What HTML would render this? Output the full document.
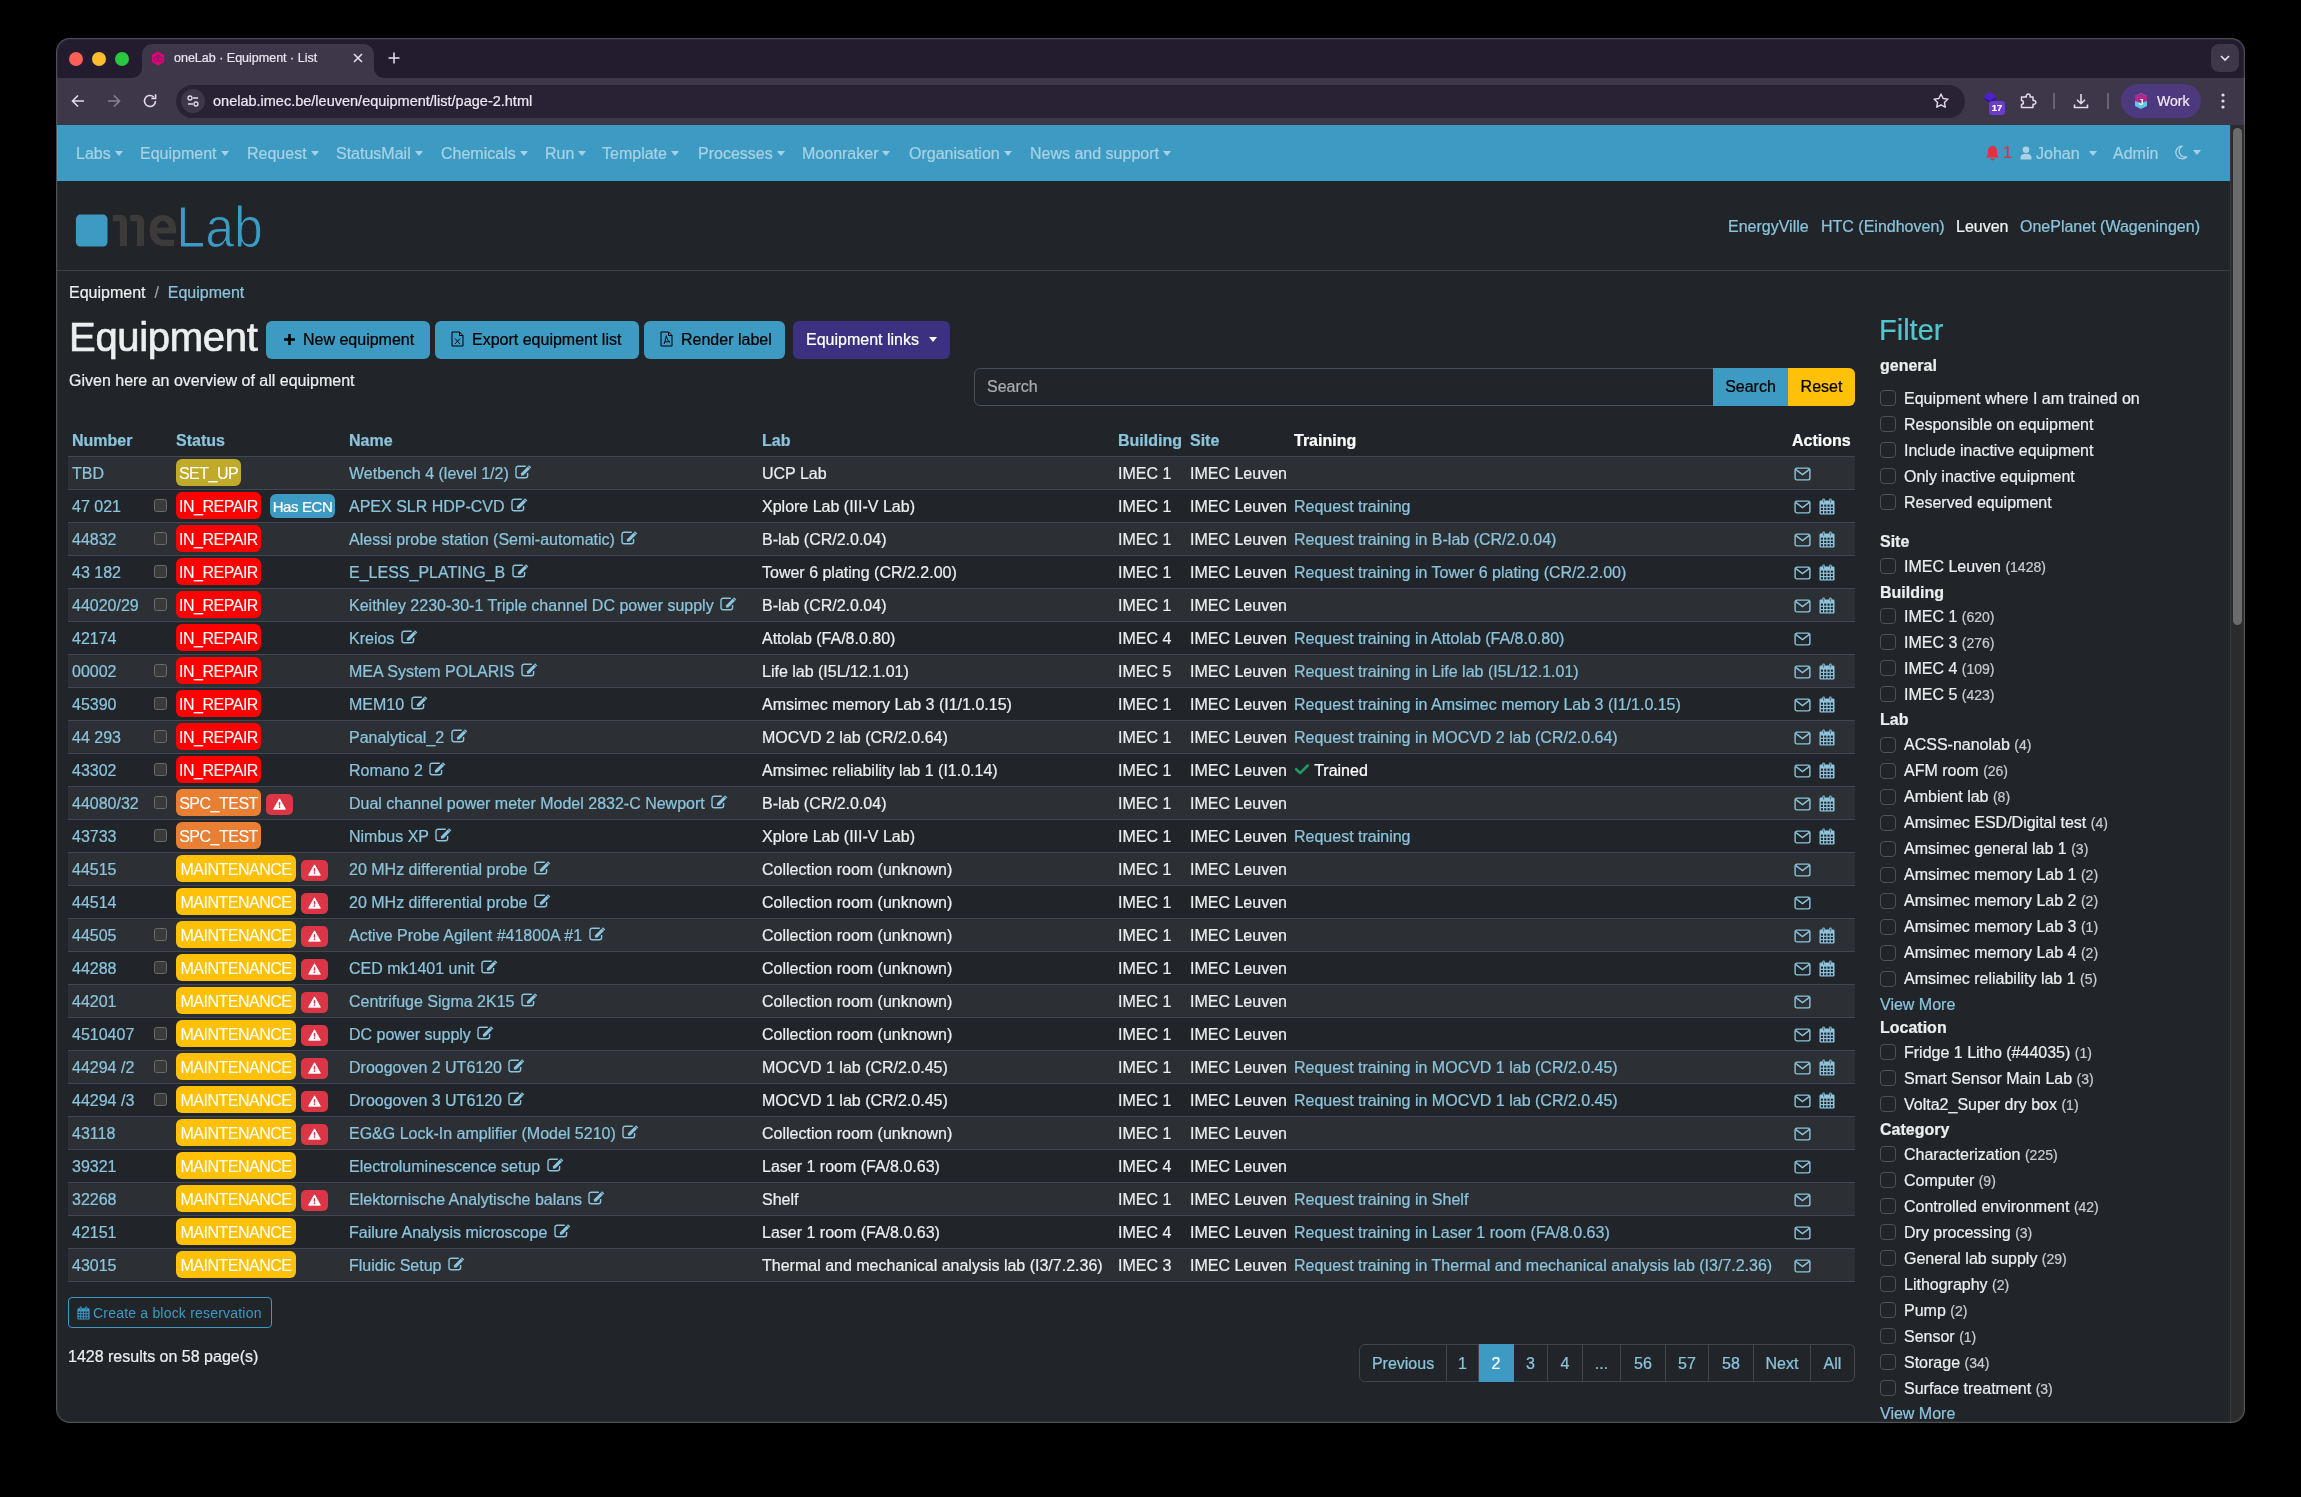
<!DOCTYPE html>
<html><head><meta charset="utf-8"><title>oneLab · Equipment · List</title>
<style>
*{box-sizing:border-box;margin:0;padding:0}
html,body{width:2301px;height:1497px;background:#000;overflow:hidden;font-family:"Liberation Sans",sans-serif;}
#win{position:absolute;left:56px;top:38px;width:2189px;height:1385px;border-radius:14px;overflow:hidden;background:#212529;}
#winb{position:absolute;left:56px;top:38px;width:2189px;height:1385px;border-radius:14px;box-shadow:inset 0 0 0 1px rgba(255,255,255,0.16),inset 0 0 0 2px rgba(255,255,255,0.05);pointer-events:none;z-index:50}
.abs{position:absolute}
#tabstrip{position:absolute;left:0;top:0;width:100%;height:40px;background:#231c2e}
#toolbar{position:absolute;left:0;top:40px;width:100%;height:47px;background:#3e3649}
#page{position:absolute;left:-56px;top:-38px;width:2301px;height:1497px;will-change:transform;-webkit-text-stroke-width:0.22px}
.nav{position:absolute;left:57px;top:125px;width:2173px;height:56px;background:#3d9ac2}
.nl{position:absolute;top:142px;font-size:16px;line-height:24px;color:#a8d2e4;white-space:nowrap}
.caret{display:inline-block;width:0;height:0;border-top:5px solid #a8d2e4;border-left:4.8px solid transparent;border-right:4.8px solid transparent;margin-left:4px;vertical-align:3.5px}
.hdr-line{position:absolute;left:57px;top:270px;width:2173px;height:1px;background:#3a3f44}
.t16{position:absolute;font-size:16px;line-height:24px;white-space:nowrap;color:#eceef0}
.th{position:absolute;font-size:16px;line-height:24px;font-weight:bold;white-space:nowrap}
.hline{position:absolute;left:68px;width:1787px;height:1px;background:#42474d}
.tr{position:absolute;left:68px;width:1787px;height:33px;border-bottom:1px solid #42474d;background:#212529}
.tr.odd{background:#2c3034}
.td{position:absolute;top:5px;font-size:16px;line-height:24px;white-space:nowrap;color:#eceef0}
.lk{color:#8bc4dc}
.ied{position:relative;top:0px;margin-left:2px}
.cb{position:absolute;top:9px;width:13px;height:13px;border-radius:2.5px;background:#3a3a3b;border:1px solid #6a6a6b}
.badge{position:absolute;-webkit-text-stroke-width:0.1px;top:2px;height:27px;border-radius:6px;color:#fff;font-size:16px;line-height:29px;text-align:center;white-space:nowrap;letter-spacing:-0.5px}
.setup{background:#bfaa2a;width:65px}
.repair{background:#ff0000;width:85px}
.spc{background:#e87f33;width:85px}
.maint{background:#ffc107;width:120px}
.ecn{position:absolute;top:4px;height:24px;width:65px;border-radius:6px;background:#3d9ac2;color:#fff;font-size:15px;line-height:25px;text-align:center;letter-spacing:-0.4px;white-space:nowrap}
.warn{position:absolute;top:7px;height:21px;width:27px;border-radius:5px;background:#dc3545;text-align:center;padding-top:4px}
.warn svg{display:block;margin:0 auto}
.mail{position:absolute;top:10px;line-height:0}
.cal{position:absolute;top:8px;line-height:0}
.chk{position:relative;top:0px}
.btn{position:absolute;top:321px;height:38px;border-radius:6px;background:#3d9ac2;color:#000;font-size:16px;line-height:38px;white-space:nowrap}
.filt-h{position:absolute;font-size:29px;line-height:34px;color:#55c5cd}
.fh{position:absolute;font-size:16px;line-height:24px;font-weight:bold;color:#eceef0;white-space:nowrap}
.fi{position:absolute;font-size:16px;line-height:24px;color:#eceef0;white-space:nowrap}
.fm{position:absolute;font-size:16px;line-height:24px;color:#8bc4dc;white-space:nowrap}
.cnt{font-size:14px;color:#c8cbcf}
.fcb{position:absolute;width:16px;height:16px;border:1px solid #4d5257;border-radius:4px;background:#212529}
.pg{position:absolute;top:1344px;height:38px;border:1px solid #41464b;border-left:none;color:#8bc4dc;font-size:16px;line-height:38px;text-align:center}
</style></head>
<body>
<div id="win"><div id="page">
<div class="abs" style="left:57px;top:38px;width:2188px;height:40px;background:#231c2e"></div>
<div class="abs" style="left:57px;top:78px;width:2188px;height:47px;background:#3e3649"></div>
<div class="abs" style="left:142px;top:44px;width:232px;height:36px;background:#3e3649;border-radius:10px 10px 0 0"></div>
<div class="abs" style="left:132px;top:68px;width:10px;height:10px;background:#3e3649"></div><div class="abs" style="left:122px;top:58px;width:20px;height:20px;background:#231c2e;border-radius:0 0 10px 0"></div>
<div class="abs" style="left:374px;top:68px;width:10px;height:10px;background:#3e3649"></div><div class="abs" style="left:374px;top:58px;width:20px;height:20px;background:#231c2e;border-radius:0 0 0 10px"></div>
<div class="abs" style="left:69px;top:52px;width:14px;height:14px;border-radius:50%;background:#fe5f57"></div>
<div class="abs" style="left:92px;top:52px;width:14px;height:14px;border-radius:50%;background:#febc2e"></div>
<div class="abs" style="left:115px;top:52px;width:14px;height:14px;border-radius:50%;background:#28c840"></div>
<svg class="abs" style="left:151px;top:51px" width="14" height="15" viewBox="0 0 14 15"><path d="M7 0.5L13 4v7L7 14.5 1 11V4z" fill="#e6007e"/><g fill="none" stroke="#8a1a5a" stroke-width="1.1"><path d="M6.3 3.6V10.3H4.6A1.7 2.1 0 0 1 4.6 6.1H6.3"/><path d="M7.7 3.6V10.3H9.4A1.7 2.1 0 0 0 9.4 6.1H7.7"/></g></svg>
<div class="abs" style="left:174px;top:50px;font-size:12.5px;line-height:16px;color:#e9e4ef;white-space:nowrap">oneLab · Equipment · List</div>
<svg class="abs" style="left:352px;top:52px" width="12" height="12" viewBox="0 0 12 12"><path d="M2 2L10 10M10 2L2 10" stroke="#e9e4ef" stroke-width="1.5"/></svg>
<svg class="abs" style="left:387px;top:51px" width="14" height="14" viewBox="0 0 14 14"><path d="M7 1.5V12.5M1.5 7H12.5" stroke="#e9e4ef" stroke-width="1.5"/></svg>
<div class="abs" style="left:2211px;top:44px;width:28px;height:28px;border-radius:8px;background:#3e3649"></div>
<svg class="abs" style="left:2218px;top:52px" width="14" height="12" viewBox="0 0 14 12"><path d="M3 4l4 4 4-4" fill="none" stroke="#e9e4ef" stroke-width="1.6"/></svg>
<svg class="abs" style="left:68px;top:91px" width="20" height="20" viewBox="0 0 20 20"><path d="M16 10H4.5M10 4.5L4.5 10 10 15.5" fill="none" stroke="#e3dbe9" stroke-width="1.6"/></svg>
<svg class="abs" style="left:104px;top:91px" width="20" height="20" viewBox="0 0 20 20"><path d="M4 10H15.5M10 4.5L15.5 10 10 15.5" fill="none" stroke="#8a8094" stroke-width="1.6"/></svg>
<svg class="abs" style="left:140px;top:91px" width="20" height="20" viewBox="0 0 20 20"><path d="M15.5 10A5.5 5.5 0 1 1 13.6 5.8" fill="none" stroke="#e3dbe9" stroke-width="1.6"/><path d="M15.6 3.2V7.4H11.4" fill="none" stroke="#e3dbe9" stroke-width="1.6"/></svg>
<div class="abs" style="left:176px;top:85px;width:1789px;height:33px;border-radius:17px;background:#292235"></div>
<div class="abs" style="left:181px;top:89px;width:24px;height:24px;border-radius:50%;background:#3e3649"></div>
<svg class="abs" style="left:185px;top:93px" width="16" height="16" viewBox="0 0 16 16"><circle cx="5" cy="5" r="2" fill="none" stroke="#e3dbe9" stroke-width="1.3"/><path d="M8 5H13M3 11H8" stroke="#e3dbe9" stroke-width="1.3"/><circle cx="11" cy="11" r="2" fill="none" stroke="#e3dbe9" stroke-width="1.3"/></svg>
<div class="abs" style="left:213px;top:92px;font-size:14.5px;line-height:18px;color:#ebe6f0;white-space:nowrap">onelab.imec.be/leuven/equipment/list/page-2.html</div>
<svg class="abs" style="left:1932px;top:92px" width="18" height="18" viewBox="0 0 18 18"><path d="M9 2l2.1 4.5 4.9.6-3.6 3.3.9 4.8L9 12.8l-4.3 2.4.9-4.8L2 7.1l4.9-.6z" fill="none" stroke="#e3dbe9" stroke-width="1.4" stroke-linejoin="round"/></svg>
<svg class="abs" style="left:1981px;top:91px" width="18" height="16" viewBox="0 0 18 16"><path d="M9 4L15 8 9 12 3 8z" fill="#2e12a0"/><path d="M9 1L16 5.5 9 10 2 5.5z" fill="#4a22c8"/></svg>
<div class="abs" style="left:1989px;top:101px;width:16px;height:14px;border-radius:3px;background:#6a3ccc;color:#fff;font-size:9.5px;line-height:14px;font-weight:bold;text-align:center">17</div>
<svg class="abs" style="left:2018px;top:92px" width="20" height="18" viewBox="0 0 20 18"><path d="M3.5 5H8.3V4A1.9 1.9 0 0 1 12.1 4V5H15V8.6H16A1.8 1.8 0 0 1 16 12.2H15V15.5H3.5V12.4A1.9 1.9 0 0 0 3.5 8.6Z" fill="none" stroke="#e3dbe9" stroke-width="1.5" stroke-linejoin="round"/></svg>
<div class="abs" style="left:2053px;top:93px;width:1.5px;height:16px;background:#6b6176"></div>
<svg class="abs" style="left:2072px;top:92px" width="18" height="18" viewBox="0 0 18 18"><path d="M9 2V11.5M5 7.8L9 11.7 13 7.8M2.5 12.5V15.5H15.5V12.5" fill="none" stroke="#e3dbe9" stroke-width="1.6"/></svg>
<div class="abs" style="left:2107px;top:93px;width:1.5px;height:16px;background:#6b6176"></div>
<div class="abs" style="left:2121px;top:84px;width:80px;height:34px;border-radius:17px;background:#4d3a7e"></div>
<svg class="abs" style="left:2134px;top:92px" width="14" height="18" viewBox="0 0 14 18"><path d="M7 1L13 4V14L7 17 1 14V4z" fill="#5bc8e8"/><path d="M7 1L13 4V9L7 11 1 9V4z" fill="#b0288c"/><text x="7" y="13" font-size="9" font-family="Liberation Sans" font-weight="bold" fill="#fff" text-anchor="middle">J</text></svg>
<div class="abs" style="left:2157px;top:92px;font-size:14px;line-height:18px;color:#efe9f5;white-space:nowrap">Work</div>
<svg class="abs" style="left:2219px;top:92px" width="8" height="18" viewBox="0 0 8 18"><circle cx="4" cy="3" r="1.6" fill="#e3dbe9"/><circle cx="4" cy="9" r="1.6" fill="#e3dbe9"/><circle cx="4" cy="15" r="1.6" fill="#e3dbe9"/></svg>
<div class="nav"></div>
<div class="nl" style="left:76px">Labs<span class="caret"></span></div>
<div class="nl" style="left:140px">Equipment<span class="caret"></span></div>
<div class="nl" style="left:247px">Request<span class="caret"></span></div>
<div class="nl" style="left:336px">StatusMail<span class="caret"></span></div>
<div class="nl" style="left:441px">Chemicals<span class="caret"></span></div>
<div class="nl" style="left:545px">Run<span class="caret"></span></div>
<div class="nl" style="left:602px">Template<span class="caret"></span></div>
<div class="nl" style="left:698px">Processes<span class="caret"></span></div>
<div class="nl" style="left:802px">Moonraker<span class="caret"></span></div>
<div class="nl" style="left:909px">Organisation<span class="caret"></span></div>
<div class="nl" style="left:1030px">News and support<span class="caret"></span></div>
<svg class="abs" style="left:1985px;top:145px" width="15" height="16" viewBox="0 0 15 16"><path d="M7.5 1C4.5 1 3 3.5 3 6.2V9.5L1 12.5H14L12 9.5V6.2C12 3.5 10.5 1 7.5 1z" fill="#e4303f"/><path d="M5.5 13.5A2 2 0 0 0 9.5 13.5z" fill="#e4303f"/></svg>
<div class="t16" style="left:2003px;top:141px;color:#e4303f">1</div>
<svg class="abs" style="left:2020px;top:146px" width="12" height="14" viewBox="0 0 12 14"><circle cx="6" cy="3.8" r="3.3" fill="#a8d2e4"/><path d="M0.5 13.5V11.5C0.5 9 2.5 7.8 6 7.8S11.5 9 11.5 11.5V13.5z" fill="#a8d2e4"/></svg>
<div class="nl" style="left:2036px">Johan<span class="caret" style="margin-left:9px"></span></div>
<div class="nl" style="left:2113px">Admin</div>
<svg class="abs" style="left:2174px;top:145px" width="14" height="15" viewBox="0 0 14 15"><path d="M8.5 1.2A6.3 6.3 0 1 0 13 11.5 5.4 5.4 0 0 1 8.5 1.2z" fill="none" stroke="#a8d2e4" stroke-width="1.3"/></svg>
<span class="caret abs" style="left:2193px;top:150px;margin:0"></span>
<svg class="abs" style="left:75px;top:200px" width="190" height="50" viewBox="0 0 190 50">
<rect x="0.9" y="14.6" width="31.6" height="32" rx="4.5" fill="#3d9ac2"/>
<g fill="#3c3b39" transform="translate(-75 -200)">
<path d="M112.8 214.9H121A6 6 0 0 1 127 220.9V245.9H119.9V221.2H112.8Z"/>
<path d="M130.2 214.9H138A6 6 0 0 1 144 220.9V245.9H136.9V221.2H130.2Z"/>
<path fill-rule="evenodd" d="M176 233.4V229C176 220.5 170.5 214.9 162.8 214.9C154.5 214.9 149.5 221.5 149.5 230.4C149.5 239.5 155 245.9 163.5 245.9H174V239.7H164C160 239.7 157.3 237 157 233.4ZM157 227.8C157.6 223.8 159.8 221.2 163 221.2C166.2 221.2 168.5 223.8 169 227.8Z"/>
</g>
<text x="101.3" y="46.6" font-family="Liberation Sans" font-size="57" fill="#3d9ac2" stroke="#212529" stroke-width="1" textLength="86.5" lengthAdjust="spacingAndGlyphs">Lab</text>
</svg>
<div class="t16" style="left:1728px;top:215px;color:#8bc4dc">EnergyVille</div>
<div class="t16" style="left:1821px;top:215px;color:#8bc4dc">HTC (Eindhoven)</div>
<div class="t16" style="left:1956px;top:215px;color:#f0f2f4">Leuven</div>
<div class="t16" style="left:2020px;top:215px;color:#8bc4dc">OnePlanet (Wageningen)</div>
<div class="hdr-line"></div>
<div class="t16" style="left:69px;top:281px">Equipment&nbsp;&nbsp;<span style="color:#9aa0a6">/</span>&nbsp;&nbsp;<span style="color:#8bc4dc">Equipment</span></div>
<div class="abs" style="left:69px;top:313px;font-size:40px;line-height:48px;color:#eceef0;letter-spacing:-0.3px;white-space:nowrap;-webkit-text-stroke-width:0.7px">Equipment</div>
<div class="btn" style="left:266px;width:164px;padding-left:17px"><svg style="position:relative;top:1px;margin-right:7px" width="13" height="13" viewBox="0 0 13 13"><path d="M6.5 1V12M1 6.5H12" stroke="#000" stroke-width="2.6"/></svg>New equipment</div>
<div class="btn" style="left:435px;width:204px;padding-left:16px"><svg style="position:relative;top:2px;margin-right:8px" width="13" height="16" viewBox="0 0 13 16"><path d="M1 1H8.5L12 4.5V15H1z M8.5 1V4.5H12" fill="none" stroke="#000" stroke-width="1"/><path d="M4 7.5L9 13M9 7.5L4 13" stroke="#000" stroke-width="1"/></svg>Export equipment list</div>
<div class="btn" style="left:644px;width:141px;padding-left:16px"><svg style="position:relative;top:2px;margin-right:8px" width="13" height="16" viewBox="0 0 13 16"><path d="M1 1H8.5L12 4.5V15H1z M8.5 1V4.5H12" fill="none" stroke="#000" stroke-width="1"/><path d="M6.5 4.5C5.5 6 6 9 4 13M6.5 5.5C7 8 8 10 10 11M4 11.5C6 10.5 8 10.5 10 11" fill="none" stroke="#000" stroke-width=".9"/></svg>Render label</div>
<div class="btn" style="left:793px;width:157px;padding-left:13px;background:#3b3180;color:#fff">Equipment links<span class="caret" style="border-top-color:#fff;margin-left:10px"></span></div>
<div class="t16" style="left:69px;top:369px">Given here an overview of all equipment</div>
<div class="abs" style="left:974px;top:368px;width:740px;height:38px;border:1px solid #495057;border-radius:6px 0 0 6px;background:#212529"></div>
<div class="t16" style="left:987px;top:375px;color:#a9adb1">Search</div>
<div class="abs" style="left:1713px;top:368px;width:75px;height:38px;background:#3d9ac2;color:#000;font-size:16px;line-height:38px;text-align:center">Search</div>
<div class="abs" style="left:1788px;top:368px;width:67px;height:38px;background:#ffc107;color:#000;font-size:16px;line-height:38px;text-align:center;border-radius:0 6px 6px 0">Reset</div>
<div class="th" style="left:72px;top:429px;color:#8bc4dc">Number</div>
<div class="th" style="left:176px;top:429px;color:#8bc4dc">Status</div>
<div class="th" style="left:349px;top:429px;color:#8bc4dc">Name</div>
<div class="th" style="left:762px;top:429px;color:#8bc4dc">Lab</div>
<div class="th" style="left:1118px;top:429px;color:#8bc4dc">Building</div>
<div class="th" style="left:1190px;top:429px;color:#8bc4dc">Site</div>
<div class="th" style="left:1294px;top:429px;color:#fff">Training</div>
<div class="th" style="left:1792px;top:429px;color:#fff">Actions</div>
<div class="hline" style="top:456px"></div>
<div class="tr odd" style="top:457px">
<div class="td lk" style="left:4px">TBD</div>
<div class="badge setup" style="left:108px">SET_UP</div>
<div class="td lk" style="left:281px">Wetbench 4 (level 1/2)&nbsp;<svg class="ied" width="17" height="14" viewBox="0 0 17 14"><path d="M10.8 1.2H3.2A2.2 2.2 0 0 0 1 3.4V10.6A2.2 2.2 0 0 0 3.2 12.8H10.4A2.2 2.2 0 0 0 12.6 10.6V8.0" fill="none" stroke="#8bc4dc" stroke-width="1.4"/><path d="M14 0.3L16.3 2.6 8.4 10.5 5.9 10.8 6.1 8.2Z" fill="#8bc4dc" stroke="#212529" stroke-width="1" paint-order="stroke"/><path d="M12.9 1.4L15.2 3.7" stroke="#212529" stroke-width="0.7"/></svg></div>
<div class="td" style="left:694px">UCP Lab</div>
<div class="td" style="left:1050px">IMEC 1</div>
<div class="td" style="left:1122px">IMEC Leuven</div>
<div class="mail" style="left:1726px"><svg class="imail" width="17" height="14" viewBox="0 0 17 14"><rect x="1.1" y="1.1" width="14.8" height="11.8" rx="1.8" fill="none" stroke="#8bc4dc" stroke-width="1.4"/><path d="M1.6 2.4l6.9 5.2 6.9-5.2" fill="none" stroke="#8bc4dc" stroke-width="1.4"/></svg></div>
</div>
<div class="tr" style="top:490px">
<div class="td lk" style="left:4px">47 021</div>
<div class="cb" style="left:86px"></div>
<div class="badge repair" style="left:108px">IN_REPAIR</div>
<div class="ecn" style="left:202px">Has ECN</div>
<div class="td lk" style="left:281px">APEX SLR HDP-CVD&nbsp;<svg class="ied" width="17" height="14" viewBox="0 0 17 14"><path d="M10.8 1.2H3.2A2.2 2.2 0 0 0 1 3.4V10.6A2.2 2.2 0 0 0 3.2 12.8H10.4A2.2 2.2 0 0 0 12.6 10.6V8.0" fill="none" stroke="#8bc4dc" stroke-width="1.4"/><path d="M14 0.3L16.3 2.6 8.4 10.5 5.9 10.8 6.1 8.2Z" fill="#8bc4dc" stroke="#212529" stroke-width="1" paint-order="stroke"/><path d="M12.9 1.4L15.2 3.7" stroke="#212529" stroke-width="0.7"/></svg></div>
<div class="td" style="left:694px">Xplore Lab (III-V Lab)</div>
<div class="td" style="left:1050px">IMEC 1</div>
<div class="td" style="left:1122px">IMEC Leuven</div>
<div class="td lk" style="left:1226px">Request training</div>
<div class="mail" style="left:1726px"><svg class="imail" width="17" height="14" viewBox="0 0 17 14"><rect x="1.1" y="1.1" width="14.8" height="11.8" rx="1.8" fill="none" stroke="#8bc4dc" stroke-width="1.4"/><path d="M1.6 2.4l6.9 5.2 6.9-5.2" fill="none" stroke="#8bc4dc" stroke-width="1.4"/></svg></div>
<div class="cal" style="left:1751px"><svg class="ical" width="16" height="17" viewBox="0 0 16 17"><rect x="0.5" y="2.5" width="15" height="14" rx="1.2" fill="#8bc4dc"/><rect x="3.3" y="0.6" width="2.6" height="4.6" rx="1.3" fill="#8bc4dc"/><rect x="10.1" y="0.6" width="2.6" height="4.6" rx="1.3" fill="#8bc4dc"/><rect x="4.1" y="1.6" width="1" height="3" fill="#212529" opacity=".6"/><rect x="10.9" y="1.6" width="1" height="3" fill="#212529" opacity=".6"/><rect x="1.90" y="6.60" width="2.1" height="2.1" fill="#212529"/><rect x="5.20" y="6.60" width="2.1" height="2.1" fill="#212529"/><rect x="8.50" y="6.60" width="2.1" height="2.1" fill="#212529"/><rect x="11.80" y="6.60" width="2.1" height="2.1" fill="#212529"/><rect x="1.90" y="9.90" width="2.1" height="2.1" fill="#212529"/><rect x="5.20" y="9.90" width="2.1" height="2.1" fill="#212529"/><rect x="8.50" y="9.90" width="2.1" height="2.1" fill="#212529"/><rect x="11.80" y="9.90" width="2.1" height="2.1" fill="#212529"/><rect x="1.90" y="13.20" width="2.1" height="2.1" fill="#212529"/><rect x="5.20" y="13.20" width="2.1" height="2.1" fill="#212529"/><rect x="8.50" y="13.20" width="2.1" height="2.1" fill="#212529"/><rect x="11.80" y="13.20" width="2.1" height="2.1" fill="#212529"/></svg></div>
</div>
<div class="tr odd" style="top:523px">
<div class="td lk" style="left:4px">44832</div>
<div class="cb" style="left:86px"></div>
<div class="badge repair" style="left:108px">IN_REPAIR</div>
<div class="td lk" style="left:281px">Alessi probe station (Semi-automatic)&nbsp;<svg class="ied" width="17" height="14" viewBox="0 0 17 14"><path d="M10.8 1.2H3.2A2.2 2.2 0 0 0 1 3.4V10.6A2.2 2.2 0 0 0 3.2 12.8H10.4A2.2 2.2 0 0 0 12.6 10.6V8.0" fill="none" stroke="#8bc4dc" stroke-width="1.4"/><path d="M14 0.3L16.3 2.6 8.4 10.5 5.9 10.8 6.1 8.2Z" fill="#8bc4dc" stroke="#212529" stroke-width="1" paint-order="stroke"/><path d="M12.9 1.4L15.2 3.7" stroke="#212529" stroke-width="0.7"/></svg></div>
<div class="td" style="left:694px">B-lab (CR/2.0.04)</div>
<div class="td" style="left:1050px">IMEC 1</div>
<div class="td" style="left:1122px">IMEC Leuven</div>
<div class="td lk" style="left:1226px">Request training in B-lab (CR/2.0.04)</div>
<div class="mail" style="left:1726px"><svg class="imail" width="17" height="14" viewBox="0 0 17 14"><rect x="1.1" y="1.1" width="14.8" height="11.8" rx="1.8" fill="none" stroke="#8bc4dc" stroke-width="1.4"/><path d="M1.6 2.4l6.9 5.2 6.9-5.2" fill="none" stroke="#8bc4dc" stroke-width="1.4"/></svg></div>
<div class="cal" style="left:1751px"><svg class="ical" width="16" height="17" viewBox="0 0 16 17"><rect x="0.5" y="2.5" width="15" height="14" rx="1.2" fill="#8bc4dc"/><rect x="3.3" y="0.6" width="2.6" height="4.6" rx="1.3" fill="#8bc4dc"/><rect x="10.1" y="0.6" width="2.6" height="4.6" rx="1.3" fill="#8bc4dc"/><rect x="4.1" y="1.6" width="1" height="3" fill="#212529" opacity=".6"/><rect x="10.9" y="1.6" width="1" height="3" fill="#212529" opacity=".6"/><rect x="1.90" y="6.60" width="2.1" height="2.1" fill="#212529"/><rect x="5.20" y="6.60" width="2.1" height="2.1" fill="#212529"/><rect x="8.50" y="6.60" width="2.1" height="2.1" fill="#212529"/><rect x="11.80" y="6.60" width="2.1" height="2.1" fill="#212529"/><rect x="1.90" y="9.90" width="2.1" height="2.1" fill="#212529"/><rect x="5.20" y="9.90" width="2.1" height="2.1" fill="#212529"/><rect x="8.50" y="9.90" width="2.1" height="2.1" fill="#212529"/><rect x="11.80" y="9.90" width="2.1" height="2.1" fill="#212529"/><rect x="1.90" y="13.20" width="2.1" height="2.1" fill="#212529"/><rect x="5.20" y="13.20" width="2.1" height="2.1" fill="#212529"/><rect x="8.50" y="13.20" width="2.1" height="2.1" fill="#212529"/><rect x="11.80" y="13.20" width="2.1" height="2.1" fill="#212529"/></svg></div>
</div>
<div class="tr" style="top:556px">
<div class="td lk" style="left:4px">43 182</div>
<div class="cb" style="left:86px"></div>
<div class="badge repair" style="left:108px">IN_REPAIR</div>
<div class="td lk" style="left:281px">E_LESS_PLATING_B&nbsp;<svg class="ied" width="17" height="14" viewBox="0 0 17 14"><path d="M10.8 1.2H3.2A2.2 2.2 0 0 0 1 3.4V10.6A2.2 2.2 0 0 0 3.2 12.8H10.4A2.2 2.2 0 0 0 12.6 10.6V8.0" fill="none" stroke="#8bc4dc" stroke-width="1.4"/><path d="M14 0.3L16.3 2.6 8.4 10.5 5.9 10.8 6.1 8.2Z" fill="#8bc4dc" stroke="#212529" stroke-width="1" paint-order="stroke"/><path d="M12.9 1.4L15.2 3.7" stroke="#212529" stroke-width="0.7"/></svg></div>
<div class="td" style="left:694px">Tower 6 plating (CR/2.2.00)</div>
<div class="td" style="left:1050px">IMEC 1</div>
<div class="td" style="left:1122px">IMEC Leuven</div>
<div class="td lk" style="left:1226px">Request training in Tower 6 plating (CR/2.2.00)</div>
<div class="mail" style="left:1726px"><svg class="imail" width="17" height="14" viewBox="0 0 17 14"><rect x="1.1" y="1.1" width="14.8" height="11.8" rx="1.8" fill="none" stroke="#8bc4dc" stroke-width="1.4"/><path d="M1.6 2.4l6.9 5.2 6.9-5.2" fill="none" stroke="#8bc4dc" stroke-width="1.4"/></svg></div>
<div class="cal" style="left:1751px"><svg class="ical" width="16" height="17" viewBox="0 0 16 17"><rect x="0.5" y="2.5" width="15" height="14" rx="1.2" fill="#8bc4dc"/><rect x="3.3" y="0.6" width="2.6" height="4.6" rx="1.3" fill="#8bc4dc"/><rect x="10.1" y="0.6" width="2.6" height="4.6" rx="1.3" fill="#8bc4dc"/><rect x="4.1" y="1.6" width="1" height="3" fill="#212529" opacity=".6"/><rect x="10.9" y="1.6" width="1" height="3" fill="#212529" opacity=".6"/><rect x="1.90" y="6.60" width="2.1" height="2.1" fill="#212529"/><rect x="5.20" y="6.60" width="2.1" height="2.1" fill="#212529"/><rect x="8.50" y="6.60" width="2.1" height="2.1" fill="#212529"/><rect x="11.80" y="6.60" width="2.1" height="2.1" fill="#212529"/><rect x="1.90" y="9.90" width="2.1" height="2.1" fill="#212529"/><rect x="5.20" y="9.90" width="2.1" height="2.1" fill="#212529"/><rect x="8.50" y="9.90" width="2.1" height="2.1" fill="#212529"/><rect x="11.80" y="9.90" width="2.1" height="2.1" fill="#212529"/><rect x="1.90" y="13.20" width="2.1" height="2.1" fill="#212529"/><rect x="5.20" y="13.20" width="2.1" height="2.1" fill="#212529"/><rect x="8.50" y="13.20" width="2.1" height="2.1" fill="#212529"/><rect x="11.80" y="13.20" width="2.1" height="2.1" fill="#212529"/></svg></div>
</div>
<div class="tr odd" style="top:589px">
<div class="td lk" style="left:4px">44020/29</div>
<div class="cb" style="left:86px"></div>
<div class="badge repair" style="left:108px">IN_REPAIR</div>
<div class="td lk" style="left:281px">Keithley 2230-30-1 Triple channel DC power supply&nbsp;<svg class="ied" width="17" height="14" viewBox="0 0 17 14"><path d="M10.8 1.2H3.2A2.2 2.2 0 0 0 1 3.4V10.6A2.2 2.2 0 0 0 3.2 12.8H10.4A2.2 2.2 0 0 0 12.6 10.6V8.0" fill="none" stroke="#8bc4dc" stroke-width="1.4"/><path d="M14 0.3L16.3 2.6 8.4 10.5 5.9 10.8 6.1 8.2Z" fill="#8bc4dc" stroke="#212529" stroke-width="1" paint-order="stroke"/><path d="M12.9 1.4L15.2 3.7" stroke="#212529" stroke-width="0.7"/></svg></div>
<div class="td" style="left:694px">B-lab (CR/2.0.04)</div>
<div class="td" style="left:1050px">IMEC 1</div>
<div class="td" style="left:1122px">IMEC Leuven</div>
<div class="mail" style="left:1726px"><svg class="imail" width="17" height="14" viewBox="0 0 17 14"><rect x="1.1" y="1.1" width="14.8" height="11.8" rx="1.8" fill="none" stroke="#8bc4dc" stroke-width="1.4"/><path d="M1.6 2.4l6.9 5.2 6.9-5.2" fill="none" stroke="#8bc4dc" stroke-width="1.4"/></svg></div>
<div class="cal" style="left:1751px"><svg class="ical" width="16" height="17" viewBox="0 0 16 17"><rect x="0.5" y="2.5" width="15" height="14" rx="1.2" fill="#8bc4dc"/><rect x="3.3" y="0.6" width="2.6" height="4.6" rx="1.3" fill="#8bc4dc"/><rect x="10.1" y="0.6" width="2.6" height="4.6" rx="1.3" fill="#8bc4dc"/><rect x="4.1" y="1.6" width="1" height="3" fill="#212529" opacity=".6"/><rect x="10.9" y="1.6" width="1" height="3" fill="#212529" opacity=".6"/><rect x="1.90" y="6.60" width="2.1" height="2.1" fill="#212529"/><rect x="5.20" y="6.60" width="2.1" height="2.1" fill="#212529"/><rect x="8.50" y="6.60" width="2.1" height="2.1" fill="#212529"/><rect x="11.80" y="6.60" width="2.1" height="2.1" fill="#212529"/><rect x="1.90" y="9.90" width="2.1" height="2.1" fill="#212529"/><rect x="5.20" y="9.90" width="2.1" height="2.1" fill="#212529"/><rect x="8.50" y="9.90" width="2.1" height="2.1" fill="#212529"/><rect x="11.80" y="9.90" width="2.1" height="2.1" fill="#212529"/><rect x="1.90" y="13.20" width="2.1" height="2.1" fill="#212529"/><rect x="5.20" y="13.20" width="2.1" height="2.1" fill="#212529"/><rect x="8.50" y="13.20" width="2.1" height="2.1" fill="#212529"/><rect x="11.80" y="13.20" width="2.1" height="2.1" fill="#212529"/></svg></div>
</div>
<div class="tr" style="top:622px">
<div class="td lk" style="left:4px">42174</div>
<div class="badge repair" style="left:108px">IN_REPAIR</div>
<div class="td lk" style="left:281px">Kreios&nbsp;<svg class="ied" width="17" height="14" viewBox="0 0 17 14"><path d="M10.8 1.2H3.2A2.2 2.2 0 0 0 1 3.4V10.6A2.2 2.2 0 0 0 3.2 12.8H10.4A2.2 2.2 0 0 0 12.6 10.6V8.0" fill="none" stroke="#8bc4dc" stroke-width="1.4"/><path d="M14 0.3L16.3 2.6 8.4 10.5 5.9 10.8 6.1 8.2Z" fill="#8bc4dc" stroke="#212529" stroke-width="1" paint-order="stroke"/><path d="M12.9 1.4L15.2 3.7" stroke="#212529" stroke-width="0.7"/></svg></div>
<div class="td" style="left:694px">Attolab (FA/8.0.80)</div>
<div class="td" style="left:1050px">IMEC 4</div>
<div class="td" style="left:1122px">IMEC Leuven</div>
<div class="td lk" style="left:1226px">Request training in Attolab (FA/8.0.80)</div>
<div class="mail" style="left:1726px"><svg class="imail" width="17" height="14" viewBox="0 0 17 14"><rect x="1.1" y="1.1" width="14.8" height="11.8" rx="1.8" fill="none" stroke="#8bc4dc" stroke-width="1.4"/><path d="M1.6 2.4l6.9 5.2 6.9-5.2" fill="none" stroke="#8bc4dc" stroke-width="1.4"/></svg></div>
</div>
<div class="tr odd" style="top:655px">
<div class="td lk" style="left:4px">00002</div>
<div class="cb" style="left:86px"></div>
<div class="badge repair" style="left:108px">IN_REPAIR</div>
<div class="td lk" style="left:281px">MEA System POLARIS&nbsp;<svg class="ied" width="17" height="14" viewBox="0 0 17 14"><path d="M10.8 1.2H3.2A2.2 2.2 0 0 0 1 3.4V10.6A2.2 2.2 0 0 0 3.2 12.8H10.4A2.2 2.2 0 0 0 12.6 10.6V8.0" fill="none" stroke="#8bc4dc" stroke-width="1.4"/><path d="M14 0.3L16.3 2.6 8.4 10.5 5.9 10.8 6.1 8.2Z" fill="#8bc4dc" stroke="#212529" stroke-width="1" paint-order="stroke"/><path d="M12.9 1.4L15.2 3.7" stroke="#212529" stroke-width="0.7"/></svg></div>
<div class="td" style="left:694px">Life lab (I5L/12.1.01)</div>
<div class="td" style="left:1050px">IMEC 5</div>
<div class="td" style="left:1122px">IMEC Leuven</div>
<div class="td lk" style="left:1226px">Request training in Life lab (I5L/12.1.01)</div>
<div class="mail" style="left:1726px"><svg class="imail" width="17" height="14" viewBox="0 0 17 14"><rect x="1.1" y="1.1" width="14.8" height="11.8" rx="1.8" fill="none" stroke="#8bc4dc" stroke-width="1.4"/><path d="M1.6 2.4l6.9 5.2 6.9-5.2" fill="none" stroke="#8bc4dc" stroke-width="1.4"/></svg></div>
<div class="cal" style="left:1751px"><svg class="ical" width="16" height="17" viewBox="0 0 16 17"><rect x="0.5" y="2.5" width="15" height="14" rx="1.2" fill="#8bc4dc"/><rect x="3.3" y="0.6" width="2.6" height="4.6" rx="1.3" fill="#8bc4dc"/><rect x="10.1" y="0.6" width="2.6" height="4.6" rx="1.3" fill="#8bc4dc"/><rect x="4.1" y="1.6" width="1" height="3" fill="#212529" opacity=".6"/><rect x="10.9" y="1.6" width="1" height="3" fill="#212529" opacity=".6"/><rect x="1.90" y="6.60" width="2.1" height="2.1" fill="#212529"/><rect x="5.20" y="6.60" width="2.1" height="2.1" fill="#212529"/><rect x="8.50" y="6.60" width="2.1" height="2.1" fill="#212529"/><rect x="11.80" y="6.60" width="2.1" height="2.1" fill="#212529"/><rect x="1.90" y="9.90" width="2.1" height="2.1" fill="#212529"/><rect x="5.20" y="9.90" width="2.1" height="2.1" fill="#212529"/><rect x="8.50" y="9.90" width="2.1" height="2.1" fill="#212529"/><rect x="11.80" y="9.90" width="2.1" height="2.1" fill="#212529"/><rect x="1.90" y="13.20" width="2.1" height="2.1" fill="#212529"/><rect x="5.20" y="13.20" width="2.1" height="2.1" fill="#212529"/><rect x="8.50" y="13.20" width="2.1" height="2.1" fill="#212529"/><rect x="11.80" y="13.20" width="2.1" height="2.1" fill="#212529"/></svg></div>
</div>
<div class="tr" style="top:688px">
<div class="td lk" style="left:4px">45390</div>
<div class="cb" style="left:86px"></div>
<div class="badge repair" style="left:108px">IN_REPAIR</div>
<div class="td lk" style="left:281px">MEM10&nbsp;<svg class="ied" width="17" height="14" viewBox="0 0 17 14"><path d="M10.8 1.2H3.2A2.2 2.2 0 0 0 1 3.4V10.6A2.2 2.2 0 0 0 3.2 12.8H10.4A2.2 2.2 0 0 0 12.6 10.6V8.0" fill="none" stroke="#8bc4dc" stroke-width="1.4"/><path d="M14 0.3L16.3 2.6 8.4 10.5 5.9 10.8 6.1 8.2Z" fill="#8bc4dc" stroke="#212529" stroke-width="1" paint-order="stroke"/><path d="M12.9 1.4L15.2 3.7" stroke="#212529" stroke-width="0.7"/></svg></div>
<div class="td" style="left:694px">Amsimec memory Lab 3 (I1/1.0.15)</div>
<div class="td" style="left:1050px">IMEC 1</div>
<div class="td" style="left:1122px">IMEC Leuven</div>
<div class="td lk" style="left:1226px">Request training in Amsimec memory Lab 3 (I1/1.0.15)</div>
<div class="mail" style="left:1726px"><svg class="imail" width="17" height="14" viewBox="0 0 17 14"><rect x="1.1" y="1.1" width="14.8" height="11.8" rx="1.8" fill="none" stroke="#8bc4dc" stroke-width="1.4"/><path d="M1.6 2.4l6.9 5.2 6.9-5.2" fill="none" stroke="#8bc4dc" stroke-width="1.4"/></svg></div>
<div class="cal" style="left:1751px"><svg class="ical" width="16" height="17" viewBox="0 0 16 17"><rect x="0.5" y="2.5" width="15" height="14" rx="1.2" fill="#8bc4dc"/><rect x="3.3" y="0.6" width="2.6" height="4.6" rx="1.3" fill="#8bc4dc"/><rect x="10.1" y="0.6" width="2.6" height="4.6" rx="1.3" fill="#8bc4dc"/><rect x="4.1" y="1.6" width="1" height="3" fill="#212529" opacity=".6"/><rect x="10.9" y="1.6" width="1" height="3" fill="#212529" opacity=".6"/><rect x="1.90" y="6.60" width="2.1" height="2.1" fill="#212529"/><rect x="5.20" y="6.60" width="2.1" height="2.1" fill="#212529"/><rect x="8.50" y="6.60" width="2.1" height="2.1" fill="#212529"/><rect x="11.80" y="6.60" width="2.1" height="2.1" fill="#212529"/><rect x="1.90" y="9.90" width="2.1" height="2.1" fill="#212529"/><rect x="5.20" y="9.90" width="2.1" height="2.1" fill="#212529"/><rect x="8.50" y="9.90" width="2.1" height="2.1" fill="#212529"/><rect x="11.80" y="9.90" width="2.1" height="2.1" fill="#212529"/><rect x="1.90" y="13.20" width="2.1" height="2.1" fill="#212529"/><rect x="5.20" y="13.20" width="2.1" height="2.1" fill="#212529"/><rect x="8.50" y="13.20" width="2.1" height="2.1" fill="#212529"/><rect x="11.80" y="13.20" width="2.1" height="2.1" fill="#212529"/></svg></div>
</div>
<div class="tr odd" style="top:721px">
<div class="td lk" style="left:4px">44 293</div>
<div class="cb" style="left:86px"></div>
<div class="badge repair" style="left:108px">IN_REPAIR</div>
<div class="td lk" style="left:281px">Panalytical_2&nbsp;<svg class="ied" width="17" height="14" viewBox="0 0 17 14"><path d="M10.8 1.2H3.2A2.2 2.2 0 0 0 1 3.4V10.6A2.2 2.2 0 0 0 3.2 12.8H10.4A2.2 2.2 0 0 0 12.6 10.6V8.0" fill="none" stroke="#8bc4dc" stroke-width="1.4"/><path d="M14 0.3L16.3 2.6 8.4 10.5 5.9 10.8 6.1 8.2Z" fill="#8bc4dc" stroke="#212529" stroke-width="1" paint-order="stroke"/><path d="M12.9 1.4L15.2 3.7" stroke="#212529" stroke-width="0.7"/></svg></div>
<div class="td" style="left:694px">MOCVD 2 lab (CR/2.0.64)</div>
<div class="td" style="left:1050px">IMEC 1</div>
<div class="td" style="left:1122px">IMEC Leuven</div>
<div class="td lk" style="left:1226px">Request training in MOCVD 2 lab (CR/2.0.64)</div>
<div class="mail" style="left:1726px"><svg class="imail" width="17" height="14" viewBox="0 0 17 14"><rect x="1.1" y="1.1" width="14.8" height="11.8" rx="1.8" fill="none" stroke="#8bc4dc" stroke-width="1.4"/><path d="M1.6 2.4l6.9 5.2 6.9-5.2" fill="none" stroke="#8bc4dc" stroke-width="1.4"/></svg></div>
<div class="cal" style="left:1751px"><svg class="ical" width="16" height="17" viewBox="0 0 16 17"><rect x="0.5" y="2.5" width="15" height="14" rx="1.2" fill="#8bc4dc"/><rect x="3.3" y="0.6" width="2.6" height="4.6" rx="1.3" fill="#8bc4dc"/><rect x="10.1" y="0.6" width="2.6" height="4.6" rx="1.3" fill="#8bc4dc"/><rect x="4.1" y="1.6" width="1" height="3" fill="#212529" opacity=".6"/><rect x="10.9" y="1.6" width="1" height="3" fill="#212529" opacity=".6"/><rect x="1.90" y="6.60" width="2.1" height="2.1" fill="#212529"/><rect x="5.20" y="6.60" width="2.1" height="2.1" fill="#212529"/><rect x="8.50" y="6.60" width="2.1" height="2.1" fill="#212529"/><rect x="11.80" y="6.60" width="2.1" height="2.1" fill="#212529"/><rect x="1.90" y="9.90" width="2.1" height="2.1" fill="#212529"/><rect x="5.20" y="9.90" width="2.1" height="2.1" fill="#212529"/><rect x="8.50" y="9.90" width="2.1" height="2.1" fill="#212529"/><rect x="11.80" y="9.90" width="2.1" height="2.1" fill="#212529"/><rect x="1.90" y="13.20" width="2.1" height="2.1" fill="#212529"/><rect x="5.20" y="13.20" width="2.1" height="2.1" fill="#212529"/><rect x="8.50" y="13.20" width="2.1" height="2.1" fill="#212529"/><rect x="11.80" y="13.20" width="2.1" height="2.1" fill="#212529"/></svg></div>
</div>
<div class="tr" style="top:754px">
<div class="td lk" style="left:4px">43302</div>
<div class="cb" style="left:86px"></div>
<div class="badge repair" style="left:108px">IN_REPAIR</div>
<div class="td lk" style="left:281px">Romano 2&nbsp;<svg class="ied" width="17" height="14" viewBox="0 0 17 14"><path d="M10.8 1.2H3.2A2.2 2.2 0 0 0 1 3.4V10.6A2.2 2.2 0 0 0 3.2 12.8H10.4A2.2 2.2 0 0 0 12.6 10.6V8.0" fill="none" stroke="#8bc4dc" stroke-width="1.4"/><path d="M14 0.3L16.3 2.6 8.4 10.5 5.9 10.8 6.1 8.2Z" fill="#8bc4dc" stroke="#212529" stroke-width="1" paint-order="stroke"/><path d="M12.9 1.4L15.2 3.7" stroke="#212529" stroke-width="0.7"/></svg></div>
<div class="td" style="left:694px">Amsimec reliability lab 1 (I1.0.14)</div>
<div class="td" style="left:1050px">IMEC 1</div>
<div class="td" style="left:1122px">IMEC Leuven</div>
<div class="td" style="left:1226px"><span class="chk"><svg width="16" height="13" viewBox="0 0 16 13"><path d="M2.2 6.2l3.9 3.9 7.6-7.6" fill="none" stroke="#1f9b5e" stroke-width="2.7" stroke-linecap="round" stroke-linejoin="round"/></svg></span> <span style="color:#fff">Trained</span></div>
<div class="mail" style="left:1726px"><svg class="imail" width="17" height="14" viewBox="0 0 17 14"><rect x="1.1" y="1.1" width="14.8" height="11.8" rx="1.8" fill="none" stroke="#8bc4dc" stroke-width="1.4"/><path d="M1.6 2.4l6.9 5.2 6.9-5.2" fill="none" stroke="#8bc4dc" stroke-width="1.4"/></svg></div>
<div class="cal" style="left:1751px"><svg class="ical" width="16" height="17" viewBox="0 0 16 17"><rect x="0.5" y="2.5" width="15" height="14" rx="1.2" fill="#8bc4dc"/><rect x="3.3" y="0.6" width="2.6" height="4.6" rx="1.3" fill="#8bc4dc"/><rect x="10.1" y="0.6" width="2.6" height="4.6" rx="1.3" fill="#8bc4dc"/><rect x="4.1" y="1.6" width="1" height="3" fill="#212529" opacity=".6"/><rect x="10.9" y="1.6" width="1" height="3" fill="#212529" opacity=".6"/><rect x="1.90" y="6.60" width="2.1" height="2.1" fill="#212529"/><rect x="5.20" y="6.60" width="2.1" height="2.1" fill="#212529"/><rect x="8.50" y="6.60" width="2.1" height="2.1" fill="#212529"/><rect x="11.80" y="6.60" width="2.1" height="2.1" fill="#212529"/><rect x="1.90" y="9.90" width="2.1" height="2.1" fill="#212529"/><rect x="5.20" y="9.90" width="2.1" height="2.1" fill="#212529"/><rect x="8.50" y="9.90" width="2.1" height="2.1" fill="#212529"/><rect x="11.80" y="9.90" width="2.1" height="2.1" fill="#212529"/><rect x="1.90" y="13.20" width="2.1" height="2.1" fill="#212529"/><rect x="5.20" y="13.20" width="2.1" height="2.1" fill="#212529"/><rect x="8.50" y="13.20" width="2.1" height="2.1" fill="#212529"/><rect x="11.80" y="13.20" width="2.1" height="2.1" fill="#212529"/></svg></div>
</div>
<div class="tr odd" style="top:787px">
<div class="td lk" style="left:4px">44080/32</div>
<div class="cb" style="left:86px"></div>
<div class="badge spc" style="left:108px">SPC_TEST</div>
<div class="warn" style="left:198px"><svg width="13" height="12" viewBox="0 0 13 12"><path d="M6.5 0.8L12.4 11.2H0.6z" fill="#fff" stroke="#fff" stroke-width="0.9" stroke-linejoin="round"/><rect x="5.75" y="4.1" width="1.5" height="3.6" rx=".6" fill="#dc3545"/><circle cx="6.5" cy="9.1" r=".85" fill="#dc3545"/></svg></div>
<div class="td lk" style="left:281px">Dual channel power meter Model 2832-C Newport&nbsp;<svg class="ied" width="17" height="14" viewBox="0 0 17 14"><path d="M10.8 1.2H3.2A2.2 2.2 0 0 0 1 3.4V10.6A2.2 2.2 0 0 0 3.2 12.8H10.4A2.2 2.2 0 0 0 12.6 10.6V8.0" fill="none" stroke="#8bc4dc" stroke-width="1.4"/><path d="M14 0.3L16.3 2.6 8.4 10.5 5.9 10.8 6.1 8.2Z" fill="#8bc4dc" stroke="#212529" stroke-width="1" paint-order="stroke"/><path d="M12.9 1.4L15.2 3.7" stroke="#212529" stroke-width="0.7"/></svg></div>
<div class="td" style="left:694px">B-lab (CR/2.0.04)</div>
<div class="td" style="left:1050px">IMEC 1</div>
<div class="td" style="left:1122px">IMEC Leuven</div>
<div class="mail" style="left:1726px"><svg class="imail" width="17" height="14" viewBox="0 0 17 14"><rect x="1.1" y="1.1" width="14.8" height="11.8" rx="1.8" fill="none" stroke="#8bc4dc" stroke-width="1.4"/><path d="M1.6 2.4l6.9 5.2 6.9-5.2" fill="none" stroke="#8bc4dc" stroke-width="1.4"/></svg></div>
<div class="cal" style="left:1751px"><svg class="ical" width="16" height="17" viewBox="0 0 16 17"><rect x="0.5" y="2.5" width="15" height="14" rx="1.2" fill="#8bc4dc"/><rect x="3.3" y="0.6" width="2.6" height="4.6" rx="1.3" fill="#8bc4dc"/><rect x="10.1" y="0.6" width="2.6" height="4.6" rx="1.3" fill="#8bc4dc"/><rect x="4.1" y="1.6" width="1" height="3" fill="#212529" opacity=".6"/><rect x="10.9" y="1.6" width="1" height="3" fill="#212529" opacity=".6"/><rect x="1.90" y="6.60" width="2.1" height="2.1" fill="#212529"/><rect x="5.20" y="6.60" width="2.1" height="2.1" fill="#212529"/><rect x="8.50" y="6.60" width="2.1" height="2.1" fill="#212529"/><rect x="11.80" y="6.60" width="2.1" height="2.1" fill="#212529"/><rect x="1.90" y="9.90" width="2.1" height="2.1" fill="#212529"/><rect x="5.20" y="9.90" width="2.1" height="2.1" fill="#212529"/><rect x="8.50" y="9.90" width="2.1" height="2.1" fill="#212529"/><rect x="11.80" y="9.90" width="2.1" height="2.1" fill="#212529"/><rect x="1.90" y="13.20" width="2.1" height="2.1" fill="#212529"/><rect x="5.20" y="13.20" width="2.1" height="2.1" fill="#212529"/><rect x="8.50" y="13.20" width="2.1" height="2.1" fill="#212529"/><rect x="11.80" y="13.20" width="2.1" height="2.1" fill="#212529"/></svg></div>
</div>
<div class="tr" style="top:820px">
<div class="td lk" style="left:4px">43733</div>
<div class="cb" style="left:86px"></div>
<div class="badge spc" style="left:108px">SPC_TEST</div>
<div class="td lk" style="left:281px">Nimbus XP&nbsp;<svg class="ied" width="17" height="14" viewBox="0 0 17 14"><path d="M10.8 1.2H3.2A2.2 2.2 0 0 0 1 3.4V10.6A2.2 2.2 0 0 0 3.2 12.8H10.4A2.2 2.2 0 0 0 12.6 10.6V8.0" fill="none" stroke="#8bc4dc" stroke-width="1.4"/><path d="M14 0.3L16.3 2.6 8.4 10.5 5.9 10.8 6.1 8.2Z" fill="#8bc4dc" stroke="#212529" stroke-width="1" paint-order="stroke"/><path d="M12.9 1.4L15.2 3.7" stroke="#212529" stroke-width="0.7"/></svg></div>
<div class="td" style="left:694px">Xplore Lab (III-V Lab)</div>
<div class="td" style="left:1050px">IMEC 1</div>
<div class="td" style="left:1122px">IMEC Leuven</div>
<div class="td lk" style="left:1226px">Request training</div>
<div class="mail" style="left:1726px"><svg class="imail" width="17" height="14" viewBox="0 0 17 14"><rect x="1.1" y="1.1" width="14.8" height="11.8" rx="1.8" fill="none" stroke="#8bc4dc" stroke-width="1.4"/><path d="M1.6 2.4l6.9 5.2 6.9-5.2" fill="none" stroke="#8bc4dc" stroke-width="1.4"/></svg></div>
<div class="cal" style="left:1751px"><svg class="ical" width="16" height="17" viewBox="0 0 16 17"><rect x="0.5" y="2.5" width="15" height="14" rx="1.2" fill="#8bc4dc"/><rect x="3.3" y="0.6" width="2.6" height="4.6" rx="1.3" fill="#8bc4dc"/><rect x="10.1" y="0.6" width="2.6" height="4.6" rx="1.3" fill="#8bc4dc"/><rect x="4.1" y="1.6" width="1" height="3" fill="#212529" opacity=".6"/><rect x="10.9" y="1.6" width="1" height="3" fill="#212529" opacity=".6"/><rect x="1.90" y="6.60" width="2.1" height="2.1" fill="#212529"/><rect x="5.20" y="6.60" width="2.1" height="2.1" fill="#212529"/><rect x="8.50" y="6.60" width="2.1" height="2.1" fill="#212529"/><rect x="11.80" y="6.60" width="2.1" height="2.1" fill="#212529"/><rect x="1.90" y="9.90" width="2.1" height="2.1" fill="#212529"/><rect x="5.20" y="9.90" width="2.1" height="2.1" fill="#212529"/><rect x="8.50" y="9.90" width="2.1" height="2.1" fill="#212529"/><rect x="11.80" y="9.90" width="2.1" height="2.1" fill="#212529"/><rect x="1.90" y="13.20" width="2.1" height="2.1" fill="#212529"/><rect x="5.20" y="13.20" width="2.1" height="2.1" fill="#212529"/><rect x="8.50" y="13.20" width="2.1" height="2.1" fill="#212529"/><rect x="11.80" y="13.20" width="2.1" height="2.1" fill="#212529"/></svg></div>
</div>
<div class="tr odd" style="top:853px">
<div class="td lk" style="left:4px">44515</div>
<div class="badge maint" style="left:108px">MAINTENANCE</div>
<div class="warn" style="left:233px"><svg width="13" height="12" viewBox="0 0 13 12"><path d="M6.5 0.8L12.4 11.2H0.6z" fill="#fff" stroke="#fff" stroke-width="0.9" stroke-linejoin="round"/><rect x="5.75" y="4.1" width="1.5" height="3.6" rx=".6" fill="#dc3545"/><circle cx="6.5" cy="9.1" r=".85" fill="#dc3545"/></svg></div>
<div class="td lk" style="left:281px">20 MHz differential probe&nbsp;<svg class="ied" width="17" height="14" viewBox="0 0 17 14"><path d="M10.8 1.2H3.2A2.2 2.2 0 0 0 1 3.4V10.6A2.2 2.2 0 0 0 3.2 12.8H10.4A2.2 2.2 0 0 0 12.6 10.6V8.0" fill="none" stroke="#8bc4dc" stroke-width="1.4"/><path d="M14 0.3L16.3 2.6 8.4 10.5 5.9 10.8 6.1 8.2Z" fill="#8bc4dc" stroke="#212529" stroke-width="1" paint-order="stroke"/><path d="M12.9 1.4L15.2 3.7" stroke="#212529" stroke-width="0.7"/></svg></div>
<div class="td" style="left:694px">Collection room (unknown)</div>
<div class="td" style="left:1050px">IMEC 1</div>
<div class="td" style="left:1122px">IMEC Leuven</div>
<div class="mail" style="left:1726px"><svg class="imail" width="17" height="14" viewBox="0 0 17 14"><rect x="1.1" y="1.1" width="14.8" height="11.8" rx="1.8" fill="none" stroke="#8bc4dc" stroke-width="1.4"/><path d="M1.6 2.4l6.9 5.2 6.9-5.2" fill="none" stroke="#8bc4dc" stroke-width="1.4"/></svg></div>
</div>
<div class="tr" style="top:886px">
<div class="td lk" style="left:4px">44514</div>
<div class="badge maint" style="left:108px">MAINTENANCE</div>
<div class="warn" style="left:233px"><svg width="13" height="12" viewBox="0 0 13 12"><path d="M6.5 0.8L12.4 11.2H0.6z" fill="#fff" stroke="#fff" stroke-width="0.9" stroke-linejoin="round"/><rect x="5.75" y="4.1" width="1.5" height="3.6" rx=".6" fill="#dc3545"/><circle cx="6.5" cy="9.1" r=".85" fill="#dc3545"/></svg></div>
<div class="td lk" style="left:281px">20 MHz differential probe&nbsp;<svg class="ied" width="17" height="14" viewBox="0 0 17 14"><path d="M10.8 1.2H3.2A2.2 2.2 0 0 0 1 3.4V10.6A2.2 2.2 0 0 0 3.2 12.8H10.4A2.2 2.2 0 0 0 12.6 10.6V8.0" fill="none" stroke="#8bc4dc" stroke-width="1.4"/><path d="M14 0.3L16.3 2.6 8.4 10.5 5.9 10.8 6.1 8.2Z" fill="#8bc4dc" stroke="#212529" stroke-width="1" paint-order="stroke"/><path d="M12.9 1.4L15.2 3.7" stroke="#212529" stroke-width="0.7"/></svg></div>
<div class="td" style="left:694px">Collection room (unknown)</div>
<div class="td" style="left:1050px">IMEC 1</div>
<div class="td" style="left:1122px">IMEC Leuven</div>
<div class="mail" style="left:1726px"><svg class="imail" width="17" height="14" viewBox="0 0 17 14"><rect x="1.1" y="1.1" width="14.8" height="11.8" rx="1.8" fill="none" stroke="#8bc4dc" stroke-width="1.4"/><path d="M1.6 2.4l6.9 5.2 6.9-5.2" fill="none" stroke="#8bc4dc" stroke-width="1.4"/></svg></div>
</div>
<div class="tr odd" style="top:919px">
<div class="td lk" style="left:4px">44505</div>
<div class="cb" style="left:86px"></div>
<div class="badge maint" style="left:108px">MAINTENANCE</div>
<div class="warn" style="left:233px"><svg width="13" height="12" viewBox="0 0 13 12"><path d="M6.5 0.8L12.4 11.2H0.6z" fill="#fff" stroke="#fff" stroke-width="0.9" stroke-linejoin="round"/><rect x="5.75" y="4.1" width="1.5" height="3.6" rx=".6" fill="#dc3545"/><circle cx="6.5" cy="9.1" r=".85" fill="#dc3545"/></svg></div>
<div class="td lk" style="left:281px">Active Probe Agilent #41800A #1&nbsp;<svg class="ied" width="17" height="14" viewBox="0 0 17 14"><path d="M10.8 1.2H3.2A2.2 2.2 0 0 0 1 3.4V10.6A2.2 2.2 0 0 0 3.2 12.8H10.4A2.2 2.2 0 0 0 12.6 10.6V8.0" fill="none" stroke="#8bc4dc" stroke-width="1.4"/><path d="M14 0.3L16.3 2.6 8.4 10.5 5.9 10.8 6.1 8.2Z" fill="#8bc4dc" stroke="#212529" stroke-width="1" paint-order="stroke"/><path d="M12.9 1.4L15.2 3.7" stroke="#212529" stroke-width="0.7"/></svg></div>
<div class="td" style="left:694px">Collection room (unknown)</div>
<div class="td" style="left:1050px">IMEC 1</div>
<div class="td" style="left:1122px">IMEC Leuven</div>
<div class="mail" style="left:1726px"><svg class="imail" width="17" height="14" viewBox="0 0 17 14"><rect x="1.1" y="1.1" width="14.8" height="11.8" rx="1.8" fill="none" stroke="#8bc4dc" stroke-width="1.4"/><path d="M1.6 2.4l6.9 5.2 6.9-5.2" fill="none" stroke="#8bc4dc" stroke-width="1.4"/></svg></div>
<div class="cal" style="left:1751px"><svg class="ical" width="16" height="17" viewBox="0 0 16 17"><rect x="0.5" y="2.5" width="15" height="14" rx="1.2" fill="#8bc4dc"/><rect x="3.3" y="0.6" width="2.6" height="4.6" rx="1.3" fill="#8bc4dc"/><rect x="10.1" y="0.6" width="2.6" height="4.6" rx="1.3" fill="#8bc4dc"/><rect x="4.1" y="1.6" width="1" height="3" fill="#212529" opacity=".6"/><rect x="10.9" y="1.6" width="1" height="3" fill="#212529" opacity=".6"/><rect x="1.90" y="6.60" width="2.1" height="2.1" fill="#212529"/><rect x="5.20" y="6.60" width="2.1" height="2.1" fill="#212529"/><rect x="8.50" y="6.60" width="2.1" height="2.1" fill="#212529"/><rect x="11.80" y="6.60" width="2.1" height="2.1" fill="#212529"/><rect x="1.90" y="9.90" width="2.1" height="2.1" fill="#212529"/><rect x="5.20" y="9.90" width="2.1" height="2.1" fill="#212529"/><rect x="8.50" y="9.90" width="2.1" height="2.1" fill="#212529"/><rect x="11.80" y="9.90" width="2.1" height="2.1" fill="#212529"/><rect x="1.90" y="13.20" width="2.1" height="2.1" fill="#212529"/><rect x="5.20" y="13.20" width="2.1" height="2.1" fill="#212529"/><rect x="8.50" y="13.20" width="2.1" height="2.1" fill="#212529"/><rect x="11.80" y="13.20" width="2.1" height="2.1" fill="#212529"/></svg></div>
</div>
<div class="tr" style="top:952px">
<div class="td lk" style="left:4px">44288</div>
<div class="cb" style="left:86px"></div>
<div class="badge maint" style="left:108px">MAINTENANCE</div>
<div class="warn" style="left:233px"><svg width="13" height="12" viewBox="0 0 13 12"><path d="M6.5 0.8L12.4 11.2H0.6z" fill="#fff" stroke="#fff" stroke-width="0.9" stroke-linejoin="round"/><rect x="5.75" y="4.1" width="1.5" height="3.6" rx=".6" fill="#dc3545"/><circle cx="6.5" cy="9.1" r=".85" fill="#dc3545"/></svg></div>
<div class="td lk" style="left:281px">CED mk1401 unit&nbsp;<svg class="ied" width="17" height="14" viewBox="0 0 17 14"><path d="M10.8 1.2H3.2A2.2 2.2 0 0 0 1 3.4V10.6A2.2 2.2 0 0 0 3.2 12.8H10.4A2.2 2.2 0 0 0 12.6 10.6V8.0" fill="none" stroke="#8bc4dc" stroke-width="1.4"/><path d="M14 0.3L16.3 2.6 8.4 10.5 5.9 10.8 6.1 8.2Z" fill="#8bc4dc" stroke="#212529" stroke-width="1" paint-order="stroke"/><path d="M12.9 1.4L15.2 3.7" stroke="#212529" stroke-width="0.7"/></svg></div>
<div class="td" style="left:694px">Collection room (unknown)</div>
<div class="td" style="left:1050px">IMEC 1</div>
<div class="td" style="left:1122px">IMEC Leuven</div>
<div class="mail" style="left:1726px"><svg class="imail" width="17" height="14" viewBox="0 0 17 14"><rect x="1.1" y="1.1" width="14.8" height="11.8" rx="1.8" fill="none" stroke="#8bc4dc" stroke-width="1.4"/><path d="M1.6 2.4l6.9 5.2 6.9-5.2" fill="none" stroke="#8bc4dc" stroke-width="1.4"/></svg></div>
<div class="cal" style="left:1751px"><svg class="ical" width="16" height="17" viewBox="0 0 16 17"><rect x="0.5" y="2.5" width="15" height="14" rx="1.2" fill="#8bc4dc"/><rect x="3.3" y="0.6" width="2.6" height="4.6" rx="1.3" fill="#8bc4dc"/><rect x="10.1" y="0.6" width="2.6" height="4.6" rx="1.3" fill="#8bc4dc"/><rect x="4.1" y="1.6" width="1" height="3" fill="#212529" opacity=".6"/><rect x="10.9" y="1.6" width="1" height="3" fill="#212529" opacity=".6"/><rect x="1.90" y="6.60" width="2.1" height="2.1" fill="#212529"/><rect x="5.20" y="6.60" width="2.1" height="2.1" fill="#212529"/><rect x="8.50" y="6.60" width="2.1" height="2.1" fill="#212529"/><rect x="11.80" y="6.60" width="2.1" height="2.1" fill="#212529"/><rect x="1.90" y="9.90" width="2.1" height="2.1" fill="#212529"/><rect x="5.20" y="9.90" width="2.1" height="2.1" fill="#212529"/><rect x="8.50" y="9.90" width="2.1" height="2.1" fill="#212529"/><rect x="11.80" y="9.90" width="2.1" height="2.1" fill="#212529"/><rect x="1.90" y="13.20" width="2.1" height="2.1" fill="#212529"/><rect x="5.20" y="13.20" width="2.1" height="2.1" fill="#212529"/><rect x="8.50" y="13.20" width="2.1" height="2.1" fill="#212529"/><rect x="11.80" y="13.20" width="2.1" height="2.1" fill="#212529"/></svg></div>
</div>
<div class="tr odd" style="top:985px">
<div class="td lk" style="left:4px">44201</div>
<div class="badge maint" style="left:108px">MAINTENANCE</div>
<div class="warn" style="left:233px"><svg width="13" height="12" viewBox="0 0 13 12"><path d="M6.5 0.8L12.4 11.2H0.6z" fill="#fff" stroke="#fff" stroke-width="0.9" stroke-linejoin="round"/><rect x="5.75" y="4.1" width="1.5" height="3.6" rx=".6" fill="#dc3545"/><circle cx="6.5" cy="9.1" r=".85" fill="#dc3545"/></svg></div>
<div class="td lk" style="left:281px">Centrifuge Sigma 2K15&nbsp;<svg class="ied" width="17" height="14" viewBox="0 0 17 14"><path d="M10.8 1.2H3.2A2.2 2.2 0 0 0 1 3.4V10.6A2.2 2.2 0 0 0 3.2 12.8H10.4A2.2 2.2 0 0 0 12.6 10.6V8.0" fill="none" stroke="#8bc4dc" stroke-width="1.4"/><path d="M14 0.3L16.3 2.6 8.4 10.5 5.9 10.8 6.1 8.2Z" fill="#8bc4dc" stroke="#212529" stroke-width="1" paint-order="stroke"/><path d="M12.9 1.4L15.2 3.7" stroke="#212529" stroke-width="0.7"/></svg></div>
<div class="td" style="left:694px">Collection room (unknown)</div>
<div class="td" style="left:1050px">IMEC 1</div>
<div class="td" style="left:1122px">IMEC Leuven</div>
<div class="mail" style="left:1726px"><svg class="imail" width="17" height="14" viewBox="0 0 17 14"><rect x="1.1" y="1.1" width="14.8" height="11.8" rx="1.8" fill="none" stroke="#8bc4dc" stroke-width="1.4"/><path d="M1.6 2.4l6.9 5.2 6.9-5.2" fill="none" stroke="#8bc4dc" stroke-width="1.4"/></svg></div>
</div>
<div class="tr" style="top:1018px">
<div class="td lk" style="left:4px">4510407</div>
<div class="cb" style="left:86px"></div>
<div class="badge maint" style="left:108px">MAINTENANCE</div>
<div class="warn" style="left:233px"><svg width="13" height="12" viewBox="0 0 13 12"><path d="M6.5 0.8L12.4 11.2H0.6z" fill="#fff" stroke="#fff" stroke-width="0.9" stroke-linejoin="round"/><rect x="5.75" y="4.1" width="1.5" height="3.6" rx=".6" fill="#dc3545"/><circle cx="6.5" cy="9.1" r=".85" fill="#dc3545"/></svg></div>
<div class="td lk" style="left:281px">DC power supply&nbsp;<svg class="ied" width="17" height="14" viewBox="0 0 17 14"><path d="M10.8 1.2H3.2A2.2 2.2 0 0 0 1 3.4V10.6A2.2 2.2 0 0 0 3.2 12.8H10.4A2.2 2.2 0 0 0 12.6 10.6V8.0" fill="none" stroke="#8bc4dc" stroke-width="1.4"/><path d="M14 0.3L16.3 2.6 8.4 10.5 5.9 10.8 6.1 8.2Z" fill="#8bc4dc" stroke="#212529" stroke-width="1" paint-order="stroke"/><path d="M12.9 1.4L15.2 3.7" stroke="#212529" stroke-width="0.7"/></svg></div>
<div class="td" style="left:694px">Collection room (unknown)</div>
<div class="td" style="left:1050px">IMEC 1</div>
<div class="td" style="left:1122px">IMEC Leuven</div>
<div class="mail" style="left:1726px"><svg class="imail" width="17" height="14" viewBox="0 0 17 14"><rect x="1.1" y="1.1" width="14.8" height="11.8" rx="1.8" fill="none" stroke="#8bc4dc" stroke-width="1.4"/><path d="M1.6 2.4l6.9 5.2 6.9-5.2" fill="none" stroke="#8bc4dc" stroke-width="1.4"/></svg></div>
<div class="cal" style="left:1751px"><svg class="ical" width="16" height="17" viewBox="0 0 16 17"><rect x="0.5" y="2.5" width="15" height="14" rx="1.2" fill="#8bc4dc"/><rect x="3.3" y="0.6" width="2.6" height="4.6" rx="1.3" fill="#8bc4dc"/><rect x="10.1" y="0.6" width="2.6" height="4.6" rx="1.3" fill="#8bc4dc"/><rect x="4.1" y="1.6" width="1" height="3" fill="#212529" opacity=".6"/><rect x="10.9" y="1.6" width="1" height="3" fill="#212529" opacity=".6"/><rect x="1.90" y="6.60" width="2.1" height="2.1" fill="#212529"/><rect x="5.20" y="6.60" width="2.1" height="2.1" fill="#212529"/><rect x="8.50" y="6.60" width="2.1" height="2.1" fill="#212529"/><rect x="11.80" y="6.60" width="2.1" height="2.1" fill="#212529"/><rect x="1.90" y="9.90" width="2.1" height="2.1" fill="#212529"/><rect x="5.20" y="9.90" width="2.1" height="2.1" fill="#212529"/><rect x="8.50" y="9.90" width="2.1" height="2.1" fill="#212529"/><rect x="11.80" y="9.90" width="2.1" height="2.1" fill="#212529"/><rect x="1.90" y="13.20" width="2.1" height="2.1" fill="#212529"/><rect x="5.20" y="13.20" width="2.1" height="2.1" fill="#212529"/><rect x="8.50" y="13.20" width="2.1" height="2.1" fill="#212529"/><rect x="11.80" y="13.20" width="2.1" height="2.1" fill="#212529"/></svg></div>
</div>
<div class="tr odd" style="top:1051px">
<div class="td lk" style="left:4px">44294 /2</div>
<div class="cb" style="left:86px"></div>
<div class="badge maint" style="left:108px">MAINTENANCE</div>
<div class="warn" style="left:233px"><svg width="13" height="12" viewBox="0 0 13 12"><path d="M6.5 0.8L12.4 11.2H0.6z" fill="#fff" stroke="#fff" stroke-width="0.9" stroke-linejoin="round"/><rect x="5.75" y="4.1" width="1.5" height="3.6" rx=".6" fill="#dc3545"/><circle cx="6.5" cy="9.1" r=".85" fill="#dc3545"/></svg></div>
<div class="td lk" style="left:281px">Droogoven 2 UT6120&nbsp;<svg class="ied" width="17" height="14" viewBox="0 0 17 14"><path d="M10.8 1.2H3.2A2.2 2.2 0 0 0 1 3.4V10.6A2.2 2.2 0 0 0 3.2 12.8H10.4A2.2 2.2 0 0 0 12.6 10.6V8.0" fill="none" stroke="#8bc4dc" stroke-width="1.4"/><path d="M14 0.3L16.3 2.6 8.4 10.5 5.9 10.8 6.1 8.2Z" fill="#8bc4dc" stroke="#212529" stroke-width="1" paint-order="stroke"/><path d="M12.9 1.4L15.2 3.7" stroke="#212529" stroke-width="0.7"/></svg></div>
<div class="td" style="left:694px">MOCVD 1 lab (CR/2.0.45)</div>
<div class="td" style="left:1050px">IMEC 1</div>
<div class="td" style="left:1122px">IMEC Leuven</div>
<div class="td lk" style="left:1226px">Request training in MOCVD 1 lab (CR/2.0.45)</div>
<div class="mail" style="left:1726px"><svg class="imail" width="17" height="14" viewBox="0 0 17 14"><rect x="1.1" y="1.1" width="14.8" height="11.8" rx="1.8" fill="none" stroke="#8bc4dc" stroke-width="1.4"/><path d="M1.6 2.4l6.9 5.2 6.9-5.2" fill="none" stroke="#8bc4dc" stroke-width="1.4"/></svg></div>
<div class="cal" style="left:1751px"><svg class="ical" width="16" height="17" viewBox="0 0 16 17"><rect x="0.5" y="2.5" width="15" height="14" rx="1.2" fill="#8bc4dc"/><rect x="3.3" y="0.6" width="2.6" height="4.6" rx="1.3" fill="#8bc4dc"/><rect x="10.1" y="0.6" width="2.6" height="4.6" rx="1.3" fill="#8bc4dc"/><rect x="4.1" y="1.6" width="1" height="3" fill="#212529" opacity=".6"/><rect x="10.9" y="1.6" width="1" height="3" fill="#212529" opacity=".6"/><rect x="1.90" y="6.60" width="2.1" height="2.1" fill="#212529"/><rect x="5.20" y="6.60" width="2.1" height="2.1" fill="#212529"/><rect x="8.50" y="6.60" width="2.1" height="2.1" fill="#212529"/><rect x="11.80" y="6.60" width="2.1" height="2.1" fill="#212529"/><rect x="1.90" y="9.90" width="2.1" height="2.1" fill="#212529"/><rect x="5.20" y="9.90" width="2.1" height="2.1" fill="#212529"/><rect x="8.50" y="9.90" width="2.1" height="2.1" fill="#212529"/><rect x="11.80" y="9.90" width="2.1" height="2.1" fill="#212529"/><rect x="1.90" y="13.20" width="2.1" height="2.1" fill="#212529"/><rect x="5.20" y="13.20" width="2.1" height="2.1" fill="#212529"/><rect x="8.50" y="13.20" width="2.1" height="2.1" fill="#212529"/><rect x="11.80" y="13.20" width="2.1" height="2.1" fill="#212529"/></svg></div>
</div>
<div class="tr" style="top:1084px">
<div class="td lk" style="left:4px">44294 /3</div>
<div class="cb" style="left:86px"></div>
<div class="badge maint" style="left:108px">MAINTENANCE</div>
<div class="warn" style="left:233px"><svg width="13" height="12" viewBox="0 0 13 12"><path d="M6.5 0.8L12.4 11.2H0.6z" fill="#fff" stroke="#fff" stroke-width="0.9" stroke-linejoin="round"/><rect x="5.75" y="4.1" width="1.5" height="3.6" rx=".6" fill="#dc3545"/><circle cx="6.5" cy="9.1" r=".85" fill="#dc3545"/></svg></div>
<div class="td lk" style="left:281px">Droogoven 3 UT6120&nbsp;<svg class="ied" width="17" height="14" viewBox="0 0 17 14"><path d="M10.8 1.2H3.2A2.2 2.2 0 0 0 1 3.4V10.6A2.2 2.2 0 0 0 3.2 12.8H10.4A2.2 2.2 0 0 0 12.6 10.6V8.0" fill="none" stroke="#8bc4dc" stroke-width="1.4"/><path d="M14 0.3L16.3 2.6 8.4 10.5 5.9 10.8 6.1 8.2Z" fill="#8bc4dc" stroke="#212529" stroke-width="1" paint-order="stroke"/><path d="M12.9 1.4L15.2 3.7" stroke="#212529" stroke-width="0.7"/></svg></div>
<div class="td" style="left:694px">MOCVD 1 lab (CR/2.0.45)</div>
<div class="td" style="left:1050px">IMEC 1</div>
<div class="td" style="left:1122px">IMEC Leuven</div>
<div class="td lk" style="left:1226px">Request training in MOCVD 1 lab (CR/2.0.45)</div>
<div class="mail" style="left:1726px"><svg class="imail" width="17" height="14" viewBox="0 0 17 14"><rect x="1.1" y="1.1" width="14.8" height="11.8" rx="1.8" fill="none" stroke="#8bc4dc" stroke-width="1.4"/><path d="M1.6 2.4l6.9 5.2 6.9-5.2" fill="none" stroke="#8bc4dc" stroke-width="1.4"/></svg></div>
<div class="cal" style="left:1751px"><svg class="ical" width="16" height="17" viewBox="0 0 16 17"><rect x="0.5" y="2.5" width="15" height="14" rx="1.2" fill="#8bc4dc"/><rect x="3.3" y="0.6" width="2.6" height="4.6" rx="1.3" fill="#8bc4dc"/><rect x="10.1" y="0.6" width="2.6" height="4.6" rx="1.3" fill="#8bc4dc"/><rect x="4.1" y="1.6" width="1" height="3" fill="#212529" opacity=".6"/><rect x="10.9" y="1.6" width="1" height="3" fill="#212529" opacity=".6"/><rect x="1.90" y="6.60" width="2.1" height="2.1" fill="#212529"/><rect x="5.20" y="6.60" width="2.1" height="2.1" fill="#212529"/><rect x="8.50" y="6.60" width="2.1" height="2.1" fill="#212529"/><rect x="11.80" y="6.60" width="2.1" height="2.1" fill="#212529"/><rect x="1.90" y="9.90" width="2.1" height="2.1" fill="#212529"/><rect x="5.20" y="9.90" width="2.1" height="2.1" fill="#212529"/><rect x="8.50" y="9.90" width="2.1" height="2.1" fill="#212529"/><rect x="11.80" y="9.90" width="2.1" height="2.1" fill="#212529"/><rect x="1.90" y="13.20" width="2.1" height="2.1" fill="#212529"/><rect x="5.20" y="13.20" width="2.1" height="2.1" fill="#212529"/><rect x="8.50" y="13.20" width="2.1" height="2.1" fill="#212529"/><rect x="11.80" y="13.20" width="2.1" height="2.1" fill="#212529"/></svg></div>
</div>
<div class="tr odd" style="top:1117px">
<div class="td lk" style="left:4px">43118</div>
<div class="badge maint" style="left:108px">MAINTENANCE</div>
<div class="warn" style="left:233px"><svg width="13" height="12" viewBox="0 0 13 12"><path d="M6.5 0.8L12.4 11.2H0.6z" fill="#fff" stroke="#fff" stroke-width="0.9" stroke-linejoin="round"/><rect x="5.75" y="4.1" width="1.5" height="3.6" rx=".6" fill="#dc3545"/><circle cx="6.5" cy="9.1" r=".85" fill="#dc3545"/></svg></div>
<div class="td lk" style="left:281px">EG&amp;G Lock-In amplifier (Model 5210)&nbsp;<svg class="ied" width="17" height="14" viewBox="0 0 17 14"><path d="M10.8 1.2H3.2A2.2 2.2 0 0 0 1 3.4V10.6A2.2 2.2 0 0 0 3.2 12.8H10.4A2.2 2.2 0 0 0 12.6 10.6V8.0" fill="none" stroke="#8bc4dc" stroke-width="1.4"/><path d="M14 0.3L16.3 2.6 8.4 10.5 5.9 10.8 6.1 8.2Z" fill="#8bc4dc" stroke="#212529" stroke-width="1" paint-order="stroke"/><path d="M12.9 1.4L15.2 3.7" stroke="#212529" stroke-width="0.7"/></svg></div>
<div class="td" style="left:694px">Collection room (unknown)</div>
<div class="td" style="left:1050px">IMEC 1</div>
<div class="td" style="left:1122px">IMEC Leuven</div>
<div class="mail" style="left:1726px"><svg class="imail" width="17" height="14" viewBox="0 0 17 14"><rect x="1.1" y="1.1" width="14.8" height="11.8" rx="1.8" fill="none" stroke="#8bc4dc" stroke-width="1.4"/><path d="M1.6 2.4l6.9 5.2 6.9-5.2" fill="none" stroke="#8bc4dc" stroke-width="1.4"/></svg></div>
</div>
<div class="tr" style="top:1150px">
<div class="td lk" style="left:4px">39321</div>
<div class="badge maint" style="left:108px">MAINTENANCE</div>
<div class="td lk" style="left:281px">Electroluminescence setup&nbsp;<svg class="ied" width="17" height="14" viewBox="0 0 17 14"><path d="M10.8 1.2H3.2A2.2 2.2 0 0 0 1 3.4V10.6A2.2 2.2 0 0 0 3.2 12.8H10.4A2.2 2.2 0 0 0 12.6 10.6V8.0" fill="none" stroke="#8bc4dc" stroke-width="1.4"/><path d="M14 0.3L16.3 2.6 8.4 10.5 5.9 10.8 6.1 8.2Z" fill="#8bc4dc" stroke="#212529" stroke-width="1" paint-order="stroke"/><path d="M12.9 1.4L15.2 3.7" stroke="#212529" stroke-width="0.7"/></svg></div>
<div class="td" style="left:694px">Laser 1 room (FA/8.0.63)</div>
<div class="td" style="left:1050px">IMEC 4</div>
<div class="td" style="left:1122px">IMEC Leuven</div>
<div class="mail" style="left:1726px"><svg class="imail" width="17" height="14" viewBox="0 0 17 14"><rect x="1.1" y="1.1" width="14.8" height="11.8" rx="1.8" fill="none" stroke="#8bc4dc" stroke-width="1.4"/><path d="M1.6 2.4l6.9 5.2 6.9-5.2" fill="none" stroke="#8bc4dc" stroke-width="1.4"/></svg></div>
</div>
<div class="tr odd" style="top:1183px">
<div class="td lk" style="left:4px">32268</div>
<div class="badge maint" style="left:108px">MAINTENANCE</div>
<div class="warn" style="left:233px"><svg width="13" height="12" viewBox="0 0 13 12"><path d="M6.5 0.8L12.4 11.2H0.6z" fill="#fff" stroke="#fff" stroke-width="0.9" stroke-linejoin="round"/><rect x="5.75" y="4.1" width="1.5" height="3.6" rx=".6" fill="#dc3545"/><circle cx="6.5" cy="9.1" r=".85" fill="#dc3545"/></svg></div>
<div class="td lk" style="left:281px">Elektornische Analytische balans&nbsp;<svg class="ied" width="17" height="14" viewBox="0 0 17 14"><path d="M10.8 1.2H3.2A2.2 2.2 0 0 0 1 3.4V10.6A2.2 2.2 0 0 0 3.2 12.8H10.4A2.2 2.2 0 0 0 12.6 10.6V8.0" fill="none" stroke="#8bc4dc" stroke-width="1.4"/><path d="M14 0.3L16.3 2.6 8.4 10.5 5.9 10.8 6.1 8.2Z" fill="#8bc4dc" stroke="#212529" stroke-width="1" paint-order="stroke"/><path d="M12.9 1.4L15.2 3.7" stroke="#212529" stroke-width="0.7"/></svg></div>
<div class="td" style="left:694px">Shelf</div>
<div class="td" style="left:1050px">IMEC 1</div>
<div class="td" style="left:1122px">IMEC Leuven</div>
<div class="td lk" style="left:1226px">Request training in Shelf</div>
<div class="mail" style="left:1726px"><svg class="imail" width="17" height="14" viewBox="0 0 17 14"><rect x="1.1" y="1.1" width="14.8" height="11.8" rx="1.8" fill="none" stroke="#8bc4dc" stroke-width="1.4"/><path d="M1.6 2.4l6.9 5.2 6.9-5.2" fill="none" stroke="#8bc4dc" stroke-width="1.4"/></svg></div>
</div>
<div class="tr" style="top:1216px">
<div class="td lk" style="left:4px">42151</div>
<div class="badge maint" style="left:108px">MAINTENANCE</div>
<div class="td lk" style="left:281px">Failure Analysis microscope&nbsp;<svg class="ied" width="17" height="14" viewBox="0 0 17 14"><path d="M10.8 1.2H3.2A2.2 2.2 0 0 0 1 3.4V10.6A2.2 2.2 0 0 0 3.2 12.8H10.4A2.2 2.2 0 0 0 12.6 10.6V8.0" fill="none" stroke="#8bc4dc" stroke-width="1.4"/><path d="M14 0.3L16.3 2.6 8.4 10.5 5.9 10.8 6.1 8.2Z" fill="#8bc4dc" stroke="#212529" stroke-width="1" paint-order="stroke"/><path d="M12.9 1.4L15.2 3.7" stroke="#212529" stroke-width="0.7"/></svg></div>
<div class="td" style="left:694px">Laser 1 room (FA/8.0.63)</div>
<div class="td" style="left:1050px">IMEC 4</div>
<div class="td" style="left:1122px">IMEC Leuven</div>
<div class="td lk" style="left:1226px">Request training in Laser 1 room (FA/8.0.63)</div>
<div class="mail" style="left:1726px"><svg class="imail" width="17" height="14" viewBox="0 0 17 14"><rect x="1.1" y="1.1" width="14.8" height="11.8" rx="1.8" fill="none" stroke="#8bc4dc" stroke-width="1.4"/><path d="M1.6 2.4l6.9 5.2 6.9-5.2" fill="none" stroke="#8bc4dc" stroke-width="1.4"/></svg></div>
</div>
<div class="tr odd" style="top:1249px">
<div class="td lk" style="left:4px">43015</div>
<div class="badge maint" style="left:108px">MAINTENANCE</div>
<div class="td lk" style="left:281px">Fluidic Setup&nbsp;<svg class="ied" width="17" height="14" viewBox="0 0 17 14"><path d="M10.8 1.2H3.2A2.2 2.2 0 0 0 1 3.4V10.6A2.2 2.2 0 0 0 3.2 12.8H10.4A2.2 2.2 0 0 0 12.6 10.6V8.0" fill="none" stroke="#8bc4dc" stroke-width="1.4"/><path d="M14 0.3L16.3 2.6 8.4 10.5 5.9 10.8 6.1 8.2Z" fill="#8bc4dc" stroke="#212529" stroke-width="1" paint-order="stroke"/><path d="M12.9 1.4L15.2 3.7" stroke="#212529" stroke-width="0.7"/></svg></div>
<div class="td" style="left:694px">Thermal and mechanical analysis lab (I3/7.2.36)</div>
<div class="td" style="left:1050px">IMEC 3</div>
<div class="td" style="left:1122px">IMEC Leuven</div>
<div class="td lk" style="left:1226px">Request training in Thermal and mechanical analysis lab (I3/7.2.36)</div>
<div class="mail" style="left:1726px"><svg class="imail" width="17" height="14" viewBox="0 0 17 14"><rect x="1.1" y="1.1" width="14.8" height="11.8" rx="1.8" fill="none" stroke="#8bc4dc" stroke-width="1.4"/><path d="M1.6 2.4l6.9 5.2 6.9-5.2" fill="none" stroke="#8bc4dc" stroke-width="1.4"/></svg></div>
</div>
<div class="abs" style="left:68px;top:1297px;width:204px;height:31px;border:1px solid #3d9ac2;border-radius:4px;color:#3d9ac2;font-size:14px;line-height:31px;padding-left:8px;white-space:nowrap;letter-spacing:0.2px;-webkit-text-stroke-width:0"><svg style="position:relative;top:2px;margin-right:3px" width="13" height="14" viewBox="0 0 16 17"><rect x="0.5" y="2.5" width="15" height="14" rx="1.2" fill="#3d9ac2"/><rect x="3.3" y="0.6" width="2.6" height="4.6" rx="1.3" fill="#3d9ac2"/><rect x="10.1" y="0.6" width="2.6" height="4.6" rx="1.3" fill="#3d9ac2"/><rect x="4.1" y="1.6" width="1" height="3" fill="#212529" opacity=".6"/><rect x="10.9" y="1.6" width="1" height="3" fill="#212529" opacity=".6"/><rect x="1.90" y="6.60" width="2.1" height="2.1" fill="#212529"/><rect x="5.20" y="6.60" width="2.1" height="2.1" fill="#212529"/><rect x="8.50" y="6.60" width="2.1" height="2.1" fill="#212529"/><rect x="11.80" y="6.60" width="2.1" height="2.1" fill="#212529"/><rect x="1.90" y="9.90" width="2.1" height="2.1" fill="#212529"/><rect x="5.20" y="9.90" width="2.1" height="2.1" fill="#212529"/><rect x="8.50" y="9.90" width="2.1" height="2.1" fill="#212529"/><rect x="11.80" y="9.90" width="2.1" height="2.1" fill="#212529"/><rect x="1.90" y="13.20" width="2.1" height="2.1" fill="#212529"/><rect x="5.20" y="13.20" width="2.1" height="2.1" fill="#212529"/><rect x="8.50" y="13.20" width="2.1" height="2.1" fill="#212529"/><rect x="11.80" y="13.20" width="2.1" height="2.1" fill="#212529"/></svg>Create a block reservation</div>
<div class="t16" style="left:68px;top:1345px">1428 results on 58 page(s)</div>
<div class="pg" style="left:1359px;width:88px;border-left:1px solid #41464b;border-radius:6px 0 0 6px;">Previous</div>
<div class="pg" style="left:1447px;width:32px;">1</div>
<div class="pg" style="left:1479px;width:35px;background:#3d9ac2;border-color:#3d9ac2;color:#fff;">2</div>
<div class="pg" style="left:1514px;width:34px;">3</div>
<div class="pg" style="left:1548px;width:35px;">4</div>
<div class="pg" style="left:1583px;width:38px;">...</div>
<div class="pg" style="left:1621px;width:45px;">56</div>
<div class="pg" style="left:1666px;width:43px;">57</div>
<div class="pg" style="left:1709px;width:45px;">58</div>
<div class="pg" style="left:1754px;width:57px;">Next</div>
<div class="pg" style="left:1811px;width:44px;border-radius:0 6px 6px 0;">All</div>
<div class="filt-h" style="left:1879px;top:313px">Filter</div>
<div class="fh" style="left:1880px;top:354.2px">general</div>
<div class="fcb" style="left:1880px;top:390.2px"></div>
<div class="fi" style="left:1904px;top:386.7px">Equipment where I am trained on</div>
<div class="fcb" style="left:1880px;top:416.2px"></div>
<div class="fi" style="left:1904px;top:412.7px">Responsible on equipment</div>
<div class="fcb" style="left:1880px;top:442.2px"></div>
<div class="fi" style="left:1904px;top:438.7px">Include inactive equipment</div>
<div class="fcb" style="left:1880px;top:468.2px"></div>
<div class="fi" style="left:1904px;top:464.7px">Only inactive equipment</div>
<div class="fcb" style="left:1880px;top:494.2px"></div>
<div class="fi" style="left:1904px;top:490.7px">Reserved equipment</div>
<div class="fh" style="left:1880px;top:530.4px">Site</div>
<div class="fcb" style="left:1880px;top:558px"></div>
<div class="fi" style="left:1904px;top:554.5px">IMEC Leuven <span class="cnt">(1428)</span></div>
<div class="fh" style="left:1880px;top:580.5px">Building</div>
<div class="fcb" style="left:1880px;top:608px"></div>
<div class="fi" style="left:1904px;top:604.5px">IMEC 1 <span class="cnt">(620)</span></div>
<div class="fcb" style="left:1880px;top:634px"></div>
<div class="fi" style="left:1904px;top:630.5px">IMEC 3 <span class="cnt">(276)</span></div>
<div class="fcb" style="left:1880px;top:660px"></div>
<div class="fi" style="left:1904px;top:656.5px">IMEC 4 <span class="cnt">(109)</span></div>
<div class="fcb" style="left:1880px;top:686px"></div>
<div class="fi" style="left:1904px;top:682.5px">IMEC 5 <span class="cnt">(423)</span></div>
<div class="fh" style="left:1880px;top:708.3px">Lab</div>
<div class="fcb" style="left:1880px;top:736.5px"></div>
<div class="fi" style="left:1904px;top:733.0px">ACSS-nanolab <span class="cnt">(4)</span></div>
<div class="fcb" style="left:1880px;top:762.5px"></div>
<div class="fi" style="left:1904px;top:759.0px">AFM room <span class="cnt">(26)</span></div>
<div class="fcb" style="left:1880px;top:788.5px"></div>
<div class="fi" style="left:1904px;top:785.0px">Ambient lab <span class="cnt">(8)</span></div>
<div class="fcb" style="left:1880px;top:814.5px"></div>
<div class="fi" style="left:1904px;top:811.0px">Amsimec ESD/Digital test <span class="cnt">(4)</span></div>
<div class="fcb" style="left:1880px;top:840.5px"></div>
<div class="fi" style="left:1904px;top:837.0px">Amsimec general lab 1 <span class="cnt">(3)</span></div>
<div class="fcb" style="left:1880px;top:866.5px"></div>
<div class="fi" style="left:1904px;top:863.0px">Amsimec memory Lab 1 <span class="cnt">(2)</span></div>
<div class="fcb" style="left:1880px;top:892.5px"></div>
<div class="fi" style="left:1904px;top:889.0px">Amsimec memory Lab 2 <span class="cnt">(2)</span></div>
<div class="fcb" style="left:1880px;top:918.5px"></div>
<div class="fi" style="left:1904px;top:915.0px">Amsimec memory Lab 3 <span class="cnt">(1)</span></div>
<div class="fcb" style="left:1880px;top:944.5px"></div>
<div class="fi" style="left:1904px;top:941.0px">Amsimec memory Lab 4 <span class="cnt">(2)</span></div>
<div class="fcb" style="left:1880px;top:970.5px"></div>
<div class="fi" style="left:1904px;top:967.0px">Amsimec reliability lab 1 <span class="cnt">(5)</span></div>
<div class="fm" style="left:1880px;top:992.5px">View More</div>
<div class="fh" style="left:1880px;top:1016.3px">Location</div>
<div class="fcb" style="left:1880px;top:1044.3px"></div>
<div class="fi" style="left:1904px;top:1040.8px">Fridge 1 Litho (#44035) <span class="cnt">(1)</span></div>
<div class="fcb" style="left:1880px;top:1070.3px"></div>
<div class="fi" style="left:1904px;top:1066.8px">Smart Sensor Main Lab <span class="cnt">(3)</span></div>
<div class="fcb" style="left:1880px;top:1096.3px"></div>
<div class="fi" style="left:1904px;top:1092.8px">Volta2_Super dry box <span class="cnt">(1)</span></div>
<div class="fh" style="left:1880px;top:1118.2px">Category</div>
<div class="fcb" style="left:1880px;top:1146px"></div>
<div class="fi" style="left:1904px;top:1142.5px">Characterization <span class="cnt">(225)</span></div>
<div class="fcb" style="left:1880px;top:1172px"></div>
<div class="fi" style="left:1904px;top:1168.5px">Computer <span class="cnt">(9)</span></div>
<div class="fcb" style="left:1880px;top:1198px"></div>
<div class="fi" style="left:1904px;top:1194.5px">Controlled environment <span class="cnt">(42)</span></div>
<div class="fcb" style="left:1880px;top:1224px"></div>
<div class="fi" style="left:1904px;top:1220.5px">Dry processing <span class="cnt">(3)</span></div>
<div class="fcb" style="left:1880px;top:1250px"></div>
<div class="fi" style="left:1904px;top:1246.5px">General lab supply <span class="cnt">(29)</span></div>
<div class="fcb" style="left:1880px;top:1276px"></div>
<div class="fi" style="left:1904px;top:1272.5px">Lithography <span class="cnt">(2)</span></div>
<div class="fcb" style="left:1880px;top:1302px"></div>
<div class="fi" style="left:1904px;top:1298.5px">Pump <span class="cnt">(2)</span></div>
<div class="fcb" style="left:1880px;top:1328px"></div>
<div class="fi" style="left:1904px;top:1324.5px">Sensor <span class="cnt">(1)</span></div>
<div class="fcb" style="left:1880px;top:1354px"></div>
<div class="fi" style="left:1904px;top:1350.5px">Storage <span class="cnt">(34)</span></div>
<div class="fcb" style="left:1880px;top:1380px"></div>
<div class="fi" style="left:1904px;top:1376.5px">Surface treatment <span class="cnt">(3)</span></div>
<div class="fm" style="left:1880px;top:1401.5px">View More</div>
<div class="abs" style="left:2230px;top:125px;width:15px;height:1298px;background:#2b2b2b;border-left:1px solid #3b3b3b"></div>
<div class="abs" style="left:2233px;top:128px;width:9px;height:497px;border-radius:5px;background:#6b6b6b"></div>
</div></div>
<div id="winb"></div>
</body></html>
